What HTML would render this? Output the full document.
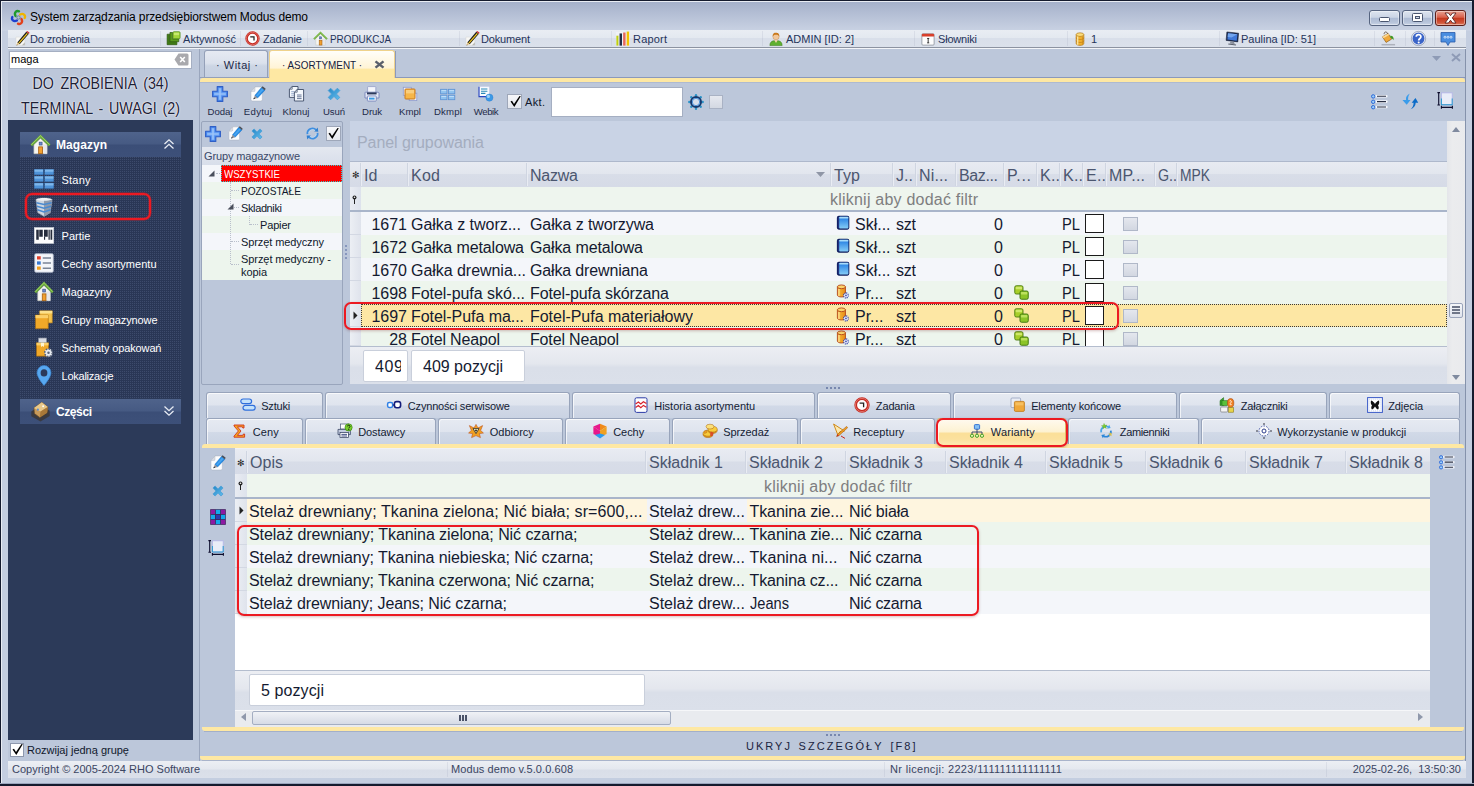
<!DOCTYPE html>
<html lang="pl"><head><meta charset="utf-8"><title>System zarządzania przedsiębiorstwem Modus demo</title><style>html,body{margin:0;padding:0}body{width:1474px;height:786px;overflow:hidden;position:relative;font-family:"Liberation Sans",sans-serif;background:#c4cee0}div{position:absolute;box-sizing:content-box}svg{display:block;overflow:visible}</style></head>
<body>
<svg width="0" height="0" style="position:absolute"><defs><linearGradient id="gdel" x1="0" y1="0" x2="1" y2="1"><stop offset="0" stop-color="#2586c6"/><stop offset="1" stop-color="#62bdec"/></linearGradient><linearGradient id="gskl" x1="0" y1="0" x2="0" y2="1"><stop offset="0" stop-color="#1f7ae2"/><stop offset="1" stop-color="#84ccf6"/></linearGradient><linearGradient id="gprod" x1="0" y1="0" x2="1" y2="0"><stop offset="0" stop-color="#f8c040"/><stop offset="1" stop-color="#e88a14"/></linearGradient></defs></svg>
<div style="left:0px;top:0px;width:1474px;height:786px;background:#c4cee0;"></div>
<div style="left:0px;top:0px;width:1474px;height:31px;background:linear-gradient(#a3afc9,#c9d2e3);"></div>
<div style="left:0px;top:0px;width:1474px;height:1px;background:#151b2e;"></div>
<div style="left:0px;top:0px;width:1px;height:786px;background:#151b2e;"></div>
<div style="left:1472px;top:0px;width:2px;height:786px;background:#151b2e;"></div>
<div style="left:0px;top:783px;width:1474px;height:1px;background:#9aa5bc;"></div>
<div style="left:0px;top:784px;width:1474px;height:2px;background:#151b2e;"></div>
<div style="left:1px;top:1px;width:1471px;height:1px;background:#e9edf4;"></div>
<div style="left:1px;top:1px;width:1px;height:782px;background:#e9edf4;"></div>
<div style="left:8px;top:30px;width:1458px;height:748px;background:#bcc7da;"></div>
<div style="left:1465px;top:30px;width:1px;height:748px;background:#8592ab;"></div>
<div style="left:10px;top:9px;width:17px;height:17px"><svg width="17" height="17" viewBox="0 0 16 16" preserveAspectRatio="none"><g fill="none" stroke-width="2.2" stroke-linecap="round"><path d="M5.2 6.5 C3.5 3.5 6 1 8.5 2.2" stroke="#1f9a2c"/><path d="M9.5 5.2 C12.5 3.5 15 6 13.8 8.5" stroke="#f0b400"/><path d="M10.8 9.5 C12.5 12.5 10 15 7.5 13.8" stroke="#e2401c"/><path d="M6.5 10.8 C3.5 12.5 1 10 2.2 7.5" stroke="#1d3fd0"/></g><circle cx="8" cy="8" r="1.6" fill="none" stroke="#5a7a8a" stroke-width=".8"/></svg></div>
<div style="left:30px;top:8px;height:18px;line-height:18px;font-size:12px;color:#000;white-space:nowrap;letter-spacing:-0.133px;">System zarządzania przedsiębiorstwem Modus demo</div>
<div style="left:1369px;top:10px;width:31px;height:16px;background:linear-gradient(#dde4ef 0%,#cbd5e5 45%,#aebcd5 52%,#b7c4da 80%,#c9d4e6 100%);border:1px solid #566480;border-radius:3px;box-sizing:border-box;box-shadow:inset 0 0 0 1px rgba(255,255,255,.4);"></div>
<div style="left:1379px;top:17px;width:11px;height:5px;background:#fff;border:1px solid #4a5670;box-sizing:border-box;border-radius:1.5px;"></div>
<div style="left:1402px;top:10px;width:31px;height:16px;background:linear-gradient(#dde4ef 0%,#cbd5e5 45%,#aebcd5 52%,#b7c4da 80%,#c9d4e6 100%);border:1px solid #566480;border-radius:3px;box-sizing:border-box;box-shadow:inset 0 0 0 1px rgba(255,255,255,.4);"></div>
<div style="left:1412px;top:13px;width:11px;height:9px;background:#fff;border:1px solid #4a5670;box-sizing:border-box;border-radius:1.5px;"></div>
<div style="left:1415px;top:16px;width:5px;height:3px;background:#cfd8e8;border:1px solid #4a5670;box-sizing:border-box;"></div>
<div style="left:1435px;top:10px;width:31px;height:16px;background:linear-gradient(#e8a394 0%,#d9604b 45%,#c4391f 52%,#cf5137 80%,#e07a5c 100%);border:1px solid #5d1f1a;border-radius:3px;box-sizing:border-box;box-shadow:inset 0 0 0 1px rgba(255,255,255,.4);"></div>
<div style="left:1444px;top:12px;width:13px;height:12px"><svg width="13" height="12" viewBox="0 0 13 12"><path d="M1 1 H4.4 L6.5 3.7 L8.6 1 H12 L8.3 5.9 L12 11 H8.6 L6.5 8.2 L4.4 11 H1 L4.7 5.9 Z" fill="#fff" stroke="#5a2626" stroke-width=".9" stroke-linejoin="round"/></svg></div>
<div style="left:8px;top:30px;width:1458px;height:17px;background:linear-gradient(#e9edf3 0%,#e3e8f0 50%,#d9dfea 50%,#dbe1eb 100%);"></div>
<div style="left:8px;top:47px;width:1458px;height:1px;background:#8c93a1;"></div>
<div style="left:8px;top:48px;width:1458px;height:1px;background:#f3f5f9;"></div>
<div style="left:15px;top:31px;width:15px;height:15px"><svg width="15" height="15" viewBox="0 0 16 16" preserveAspectRatio="none"><path d="M1 6.5 L10.5 6.5 L10.5 15.2 L1 15.2 Z" fill="#f7f7f5" stroke="#d0d0cc" stroke-width=".4"/><path d="M7.4 15.2 L10.5 12 L10.5 15.2 Z" fill="#b9b9b4"/><path d="M12 0.9 L14.8 3 L5 14.2 L2.4 12.2 Z" fill="#1c1c1c"/><path d="M12.7 2 L13.7 2.8 L4.6 13.2 L3.6 12.4 Z" fill="#f4c81c"/><path d="M2.4 12.2 L5 14.2 L1.6 15.4 Z" fill="#e9c88a"/><path d="M2 14.4 L2.8 15 L1.6 15.4 Z" fill="#222"/><path d="M12 0.9 L14.8 3 L15.6 1.9 L13 0 Z" fill="#d42a2a"/></svg></div>
<div style="left:30px;top:31px;height:16px;line-height:16px;font-size:11px;color:#25345a;white-space:nowrap;letter-spacing:-0.161px;">Do zrobienia</div>
<div style="left:166px;top:31px;width:15px;height:15px"><svg width="15" height="15" viewBox="0 0 16 16" preserveAspectRatio="none"><path d="M1.2 3.4 H4 V11.2 H11.6 V14.6 H1.2 Z" fill="#3f7a14" stroke="#2c560c" stroke-width=".7"/><path d="M4.2 1.6 H7 V8.4 H13.6 V11.4 H4.2 Z" fill="#5a9a1e" stroke="#2c560c" stroke-width=".7"/><rect x="7.4" y="0.8" width="7.6" height="7.4" rx="1" fill="#a4d63c" stroke="#4f8a18" stroke-width=".8"/><rect x="8.4" y="1.8" width="5.6" height="2.6" fill="#d0ee7c" opacity=".8"/></svg></div>
<div style="left:183px;top:31px;height:16px;line-height:16px;font-size:11px;color:#25345a;white-space:nowrap;letter-spacing:0.053px;">Aktywność</div>
<div style="left:245px;top:31px;width:15px;height:15px"><svg width="15" height="15" viewBox="0 0 16 16" preserveAspectRatio="none"><circle cx="8" cy="8" r="6.3" fill="#fdfdfd" stroke="#c62a20" stroke-width="2.7"/><circle cx="8" cy="8" r="6.6" fill="none" stroke="#f0a098" stroke-width=".7" opacity=".8"/><path d="M5.6 6.2 L9.6 6.2 L9.6 10.2" fill="none" stroke="#222" stroke-width="1.3"/></svg></div>
<div style="left:263px;top:31px;height:16px;line-height:16px;font-size:11px;color:#25345a;white-space:nowrap;letter-spacing:-0.128px;">Zadanie</div>
<div style="left:313px;top:31px;width:15px;height:15px"><svg width="15" height="15" viewBox="0 0 16 16" preserveAspectRatio="none"><path d="M3 8 L8 3.4 L13 8 V15 H3 Z" fill="#f6f6f2" stroke="#c4c4bc" stroke-width=".5"/><path d="M9.4 8 L13 8 V15 H10.6 Z" fill="#e2e4e8" opacity=".8"/><path d="M1 8.6 L8 1.8 L15 8.6" fill="none" stroke="#6cab3c" stroke-width="1.9" stroke-linejoin="miter"/><path d="M1 8.6 L8 1.8 L15 8.6" fill="none" stroke="#b4e07a" stroke-width=".5" transform="translate(0,-.5)"/><rect x="6.6" y="9.8" width="3" height="5.2" fill="#f0a030" stroke="#a05a10" stroke-width=".6"/><rect x="7" y="6.2" width="2.2" height="2.2" fill="#6a8ad0" stroke="#3a4f84" stroke-width=".5"/></svg></div>
<div style="left:330px;top:31px;height:16px;line-height:16px;font-size:11px;color:#25345a;white-space:nowrap;transform:scaleX(0.8991);transform-origin:left center;">PRODUKCJA</div>
<div style="left:465px;top:31px;width:15px;height:15px"><svg width="15" height="15" viewBox="0 0 16 16" preserveAspectRatio="none"><path d="M1 6.5 L10.5 6.5 L10.5 15.2 L1 15.2 Z" fill="#f7f7f5" stroke="#d0d0cc" stroke-width=".4"/><path d="M7.4 15.2 L10.5 12 L10.5 15.2 Z" fill="#b9b9b4"/><path d="M12 0.9 L14.8 3 L5 14.2 L2.4 12.2 Z" fill="#1c1c1c"/><path d="M12.7 2 L13.7 2.8 L4.6 13.2 L3.6 12.4 Z" fill="#f4c81c"/><path d="M2.4 12.2 L5 14.2 L1.6 15.4 Z" fill="#e9c88a"/><path d="M2 14.4 L2.8 15 L1.6 15.4 Z" fill="#222"/><path d="M12 0.9 L14.8 3 L15.6 1.9 L13 0 Z" fill="#d42a2a"/></svg></div>
<div style="left:481px;top:31px;height:16px;line-height:16px;font-size:11px;color:#25345a;white-space:nowrap;letter-spacing:-0.163px;">Dokument</div>
<div style="left:616px;top:31px;width:15px;height:15px"><svg width="15" height="15" viewBox="0 0 16 16" preserveAspectRatio="none"><rect x="0" y="1" width="14.6" height="14.6" fill="#f4f5f9" opacity=".7"/><rect x="0.4" y="5" width="2.2" height="10.6" fill="#bfcf10"/><rect x="3.8" y="2.6" width="2.6" height="13" fill="#222e48"/><rect x="7.6" y="1.6" width="2.6" height="14" fill="#e8685a"/><rect x="11.4" y="0.6" width="2.6" height="15" fill="#f2c200"/></svg></div>
<div style="left:633px;top:31px;height:16px;line-height:16px;font-size:11px;color:#25345a;white-space:nowrap;letter-spacing:0.194px;">Raport</div>
<div style="left:769px;top:32px;width:14px;height:14px"><svg width="14" height="14" viewBox="0 0 16 16" preserveAspectRatio="none"><path d="M1 15.5 C1 11 4 9.8 8 9.8 C12 9.8 15 11 15 15.5 Z" fill="#5fb030" stroke="#3a7a18" stroke-width=".6"/><path d="M6 9 L8 12.5 L10 9 Z" fill="#f6d4ae"/><circle cx="8" cy="5.3" r="3.6" fill="#f2c79a" stroke="#b98a58" stroke-width=".5"/><path d="M4.3 5 C4 1.5 6 0.8 8 0.8 C10 0.8 12 1.5 11.7 5 C11 3.4 9.5 3 8 3 C6.5 3 5 3.4 4.3 5 Z" fill="#c97a1e"/></svg></div>
<div style="left:786px;top:31px;height:16px;line-height:16px;font-size:11px;color:#25345a;white-space:nowrap;letter-spacing:0.013px;">ADMIN [ID: 2]</div>
<div style="left:921px;top:32px;width:14px;height:14px"><svg width="14" height="14" viewBox="0 0 16 16" preserveAspectRatio="none"><rect x="1" y="2" width="14" height="13" rx="1.2" fill="#fdfdfd" stroke="#8a8f9a" stroke-width=".9"/><path d="M1 3.2 a1.2 1.2 0 0 1 1.2 -1.2 H13.8 a1.2 1.2 0 0 1 1.2 1.2 V5 H1 Z" fill="#d8402c"/><path d="M7 7.4 H9.4 M8.2 7.4 V12.4 M7 12.4 H9.4" stroke="#222" stroke-width="1"/></svg></div>
<div style="left:938px;top:31px;height:16px;line-height:16px;font-size:11px;color:#25345a;white-space:nowrap;letter-spacing:-0.194px;">Słowniki</div>
<div style="left:1073px;top:32px;width:14px;height:14px"><svg width="14" height="14" viewBox="0 0 16 16" preserveAspectRatio="none"><path d="M3.6 3 V13 C3.6 14.4 5.4 15.3 8 15.3 C10.6 15.3 12.4 14.4 12.4 13 V3 Z" fill="#f0b02c" stroke="#a86c10" stroke-width=".7"/><ellipse cx="8" cy="3" rx="4.4" ry="2.1" fill="#fbdc7a" stroke="#a86c10" stroke-width=".7"/><path d="M3.6 6.4 C3.6 7.8 5.4 8.6 8 8.6 C10.6 8.6 12.4 7.8 12.4 6.4 M3.6 9.8 C3.6 11.2 5.4 12 8 12 C10.6 12 12.4 11.2 12.4 9.8" fill="none" stroke="#b87818" stroke-width=".7"/><path d="M5.4 5 V14.6" stroke="#fdeeb0" stroke-width="1.3"/><path d="M10.8 5 V14.2" stroke="#c88418" stroke-width="1.2" opacity=".6"/></svg></div>
<div style="left:1091px;top:31px;height:16px;line-height:16px;font-size:11px;color:#25345a;white-space:nowrap;">1</div>
<div style="left:1225px;top:31px;width:15px;height:15px"><svg width="15" height="15" viewBox="0 0 16 16" preserveAspectRatio="none"><path d="M2 1 L14.5 2.4 L13.6 11.6 L1.2 10 Z" fill="#1f2f55" stroke="#0e1730" stroke-width=".6"/><path d="M3.2 2.4 L13.2 3.5 L12.5 10.3 L2.6 9.1 Z" fill="#3f78d8"/><path d="M3.2 2.4 L13.2 3.5 L7 7 L2.8 6.5 Z" fill="#7fb0f4" opacity=".8"/><path d="M6 11 L9.5 11.5 L10.5 14 L5 13.4 Z" fill="#8a909c"/><path d="M3.6 13.4 L11.8 14.3 L11.6 15.4 L3.4 14.5 Z" fill="#5a606c"/></svg></div>
<div style="left:1241px;top:31px;height:16px;line-height:16px;font-size:11px;color:#25345a;white-space:nowrap;letter-spacing:-0.015px;">Paulina [ID: 51]</div>
<div style="left:160px;top:31px;width:1px;height:15px;background:rgba(140,150,175,.16);"></div>
<div style="left:240px;top:31px;width:1px;height:15px;background:rgba(140,150,175,.16);"></div>
<div style="left:307px;top:31px;width:1px;height:15px;background:rgba(140,150,175,.16);"></div>
<div style="left:459px;top:31px;width:1px;height:15px;background:rgba(140,150,175,.16);"></div>
<div style="left:611px;top:31px;width:1px;height:15px;background:rgba(140,150,175,.16);"></div>
<div style="left:762px;top:31px;width:1px;height:15px;background:rgba(140,150,175,.16);"></div>
<div style="left:914px;top:31px;width:1px;height:15px;background:rgba(140,150,175,.16);"></div>
<div style="left:1067px;top:31px;width:1px;height:15px;background:rgba(140,150,175,.16);"></div>
<div style="left:1219px;top:31px;width:1px;height:15px;background:rgba(140,150,175,.16);"></div>
<div style="left:1374px;top:31px;width:1px;height:15px;background:rgba(140,150,175,.16);"></div>
<div style="left:1405px;top:31px;width:1px;height:15px;background:rgba(140,150,175,.16);"></div>
<div style="left:1434px;top:31px;width:1px;height:15px;background:rgba(140,150,175,.16);"></div>
<div style="left:1381px;top:31px;width:15px;height:15px"><svg width="15" height="15" viewBox="0 0 16 16" preserveAspectRatio="none"><rect x="0.6" y="13.8" width="14.4" height="1.6" fill="#aeb2bc"/><path d="M1.6 6.2 L7.6 2.6 L11.4 8.6 L5.4 12.2 Z" fill="#f0a83a" stroke="#8a5a14" stroke-width=".7"/><path d="M1.6 6.2 L7.6 2.6 L8.6 4.2 L2.6 7.8 Z" fill="#fbd894"/><path d="M3.4 3.4 C3 0.6 6.4 0 7 3" fill="none" stroke="#5a4a3a" stroke-width=".9"/><path d="M9.6 5 C12.4 4.6 14 6.6 13.4 9.8 C12.4 8.4 11.4 7.6 10.4 7.4 Z" fill="#3f9a24"/></svg></div>
<div style="left:1411px;top:31px;width:15px;height:15px"><svg width="15" height="15" viewBox="0 0 16 16" preserveAspectRatio="none"><circle cx="8" cy="8" r="7" fill="#3a64c8" stroke="#e8ecf6" stroke-width="1.3"/><circle cx="8" cy="8" r="7.6" fill="none" stroke="#5a6a8a" stroke-width=".5"/><path d="M5.6 6.2 C5.6 3.2 10.6 3.2 10.6 6.2 C10.6 8 8.2 8 8.2 10" fill="none" stroke="#fff" stroke-width="1.8"/><circle cx="8.2" cy="12.2" r="1.1" fill="#fff"/></svg></div>
<div style="left:1440px;top:31px;width:16px;height:16px"><svg width="16" height="16" viewBox="0 0 16 16" preserveAspectRatio="none"><path d="M1 1.5 H15 V11 H10 L8 14.5 L6 11 H1 Z" fill="#4a8ee0" stroke="#2a5aa8" stroke-width=".8"/><circle cx="5" cy="6.2" r="1" fill="none" stroke="#fff" stroke-width=".7"/><circle cx="8" cy="6.2" r="1" fill="none" stroke="#fff" stroke-width=".7"/><circle cx="11" cy="6.2" r="1" fill="none" stroke="#fff" stroke-width=".7"/></svg></div>
<div style="left:9px;top:51px;width:183px;height:18px;background:#fff;border:1px solid #a5afc2;box-sizing:border-box;"></div>
<div style="left:11px;top:51px;height:17px;line-height:17px;font-size:11px;color:#000;white-space:nowrap;">maga</div>
<div style="left:174px;top:53px;width:15px;height:13px"><svg width="15" height="13" viewBox="0 0 15 13"><path d="M4.5 0.5 H13 a1.5 1.5 0 0 1 1.5 1.5 V11 a1.5 1.5 0 0 1 -1.5 1.5 H4.5 L0.5 6.5 Z" fill="#a9a9ad"/><path d="M6.2 4 L10.8 9 M10.8 4 L6.2 9" stroke="#fff" stroke-width="1.6"/></svg></div>
<div style="left:8px;top:72px;height:24px;line-height:24px;font-size:16px;color:#1c2036;white-space:nowrap;width:185px;text-align:center;overflow:hidden;transform:scaleX(0.8906);transform-origin:center center;text-shadow:0 0 2px #fff,0 0 1px #fff;word-spacing:3px;">DO ZROBIENIA (34)</div>
<div style="left:8px;top:97px;height:24px;line-height:24px;font-size:16px;color:#1c2036;white-space:nowrap;width:185px;text-align:center;overflow:hidden;transform:scaleX(0.8925);transform-origin:center center;text-shadow:0 0 2px #fff,0 0 1px #fff;word-spacing:2px;">TERMINAL - UWAGI (2)</div>
<div style="left:8px;top:120px;width:185px;height:620px;background:#2c3a59;"></div>
<div style="left:20px;top:157px;width:161px;height:241px;background:#2a3756"><svg width="161" height="241"><defs><pattern id="dots" width="2" height="2" patternUnits="userSpaceOnUse"><rect width="1" height="1" fill="#3d4b6c"/></pattern></defs><rect width="161" height="241" fill="url(#dots)"/></svg></div>
<div style="left:20px;top:132px;width:161px;height:25px;background:linear-gradient(#4f638b 0%,#465a83 48%,#3b4e77 52%,#3d5079 100%);"></div>
<div style="left:30px;top:134px;width:21px;height:21px"><svg width="21" height="21" viewBox="0 0 16 16" preserveAspectRatio="none"><path d="M3 8 L8 3.4 L13 8 V15 H3 Z" fill="#f6f6f2" stroke="#c4c4bc" stroke-width=".5"/><path d="M9.4 8 L13 8 V15 H10.6 Z" fill="#e2e4e8" opacity=".8"/><path d="M1 8.6 L8 1.8 L15 8.6" fill="none" stroke="#6cab3c" stroke-width="1.9" stroke-linejoin="miter"/><path d="M1 8.6 L8 1.8 L15 8.6" fill="none" stroke="#b4e07a" stroke-width=".5" transform="translate(0,-.5)"/><rect x="6.6" y="9.8" width="3" height="5.2" fill="#f0a030" stroke="#a05a10" stroke-width=".6"/><rect x="7" y="6.2" width="2.2" height="2.2" fill="#6a8ad0" stroke="#3a4f84" stroke-width=".5"/></svg></div>
<div style="left:56px;top:133px;height:25px;line-height:25px;font-size:12px;color:#fff;white-space:nowrap;letter-spacing:0.052px;font-weight:bold;">Magazyn</div>
<div style="left:163px;top:138px;width:12px;height:12px"><svg width="12" height="12" viewBox="0 0 12 12"><path d="M1.5 6 L6 1.8 L10.5 6 M1.5 10.5 L6 6.3 L10.5 10.5" fill="none" stroke="#e8ecf4" stroke-width="1.3"/></svg></div>
<div style="left:34px;top:169px;width:20px;height:20px"><svg width="20" height="20" viewBox="0 0 16 16" preserveAspectRatio="none"><g fill="#4f93d8" stroke="#3473b8" stroke-width=".3"><rect x="0.2" y="0.2" width="7.2" height="4.4"/><rect x="8.6" y="0.2" width="7.2" height="4.4"/><rect x="0.2" y="5.7" width="7.2" height="4.4"/><rect x="8.6" y="5.7" width="7.2" height="4.4"/><rect x="0.2" y="11.2" width="7.2" height="4.4"/><rect x="8.6" y="11.2" width="7.2" height="4.4"/></g><g fill="#8fc4f2" opacity=".75"><rect x="0.4" y="0.4" width="6.8" height="1.8"/><rect x="8.8" y="0.4" width="6.8" height="1.8"/><rect x="0.4" y="5.9" width="6.8" height="1.8"/><rect x="8.8" y="5.9" width="6.8" height="1.8"/><rect x="0.4" y="11.4" width="6.8" height="1.8"/><rect x="8.8" y="11.4" width="6.8" height="1.8"/></g></svg></div>
<div style="left:61.5px;top:171px;height:18px;line-height:18px;font-size:11px;color:#fff;white-space:nowrap;letter-spacing:0.215px;">Stany</div>
<div style="left:34px;top:197px;width:20px;height:20px"><svg width="20" height="20" viewBox="0 0 16 16" preserveAspectRatio="none"><path d="M1.5 2 C5 0.4 11 0.4 14.5 2 L13 12.5 L8 15.5 L3 12.5 Z" fill="#cfd6e0" stroke="#8a94a4" stroke-width=".5"/><path d="M8 2.4 L14.5 2 L13 12.5 L8 15.5 Z" fill="#8f9aac"/><path d="M1.9 4.6 L8 6 L14.1 4.6 M2.3 7.4 L8 9 L13.7 7.4 M2.7 10.2 L8 12 L13.3 10.2" fill="none" stroke="#4a8ad0" stroke-width="1.2"/><path d="M1.5 2 C5 0.4 11 0.4 14.5 2 C11 3.4 5 3.4 1.5 2 Z" fill="#eef1f5"/></svg></div>
<div style="left:61.5px;top:199px;height:18px;line-height:18px;font-size:11px;color:#fff;white-space:nowrap;letter-spacing:0.040px;">Asortyment</div>
<div style="left:34px;top:225px;width:20px;height:20px"><svg width="20" height="20" viewBox="0 0 16 16" preserveAspectRatio="none"><rect x="0.2" y="2" width="15.6" height="12.8" fill="#fdfdfe" stroke="#d0d4dc" stroke-width=".4"/><g fill="#262c3c"><rect x="1.8" y="3.8" width="2" height="8"/><rect x="4.2" y="3.8" width="2.8" height="5.6"/><rect x="8" y="3.8" width="3" height="5.6"/><rect x="11.6" y="3.8" width="1" height="8"/><rect x="13.2" y="3.8" width="1.4" height="8"/><rect x="8" y="9.4" width=".9" height="2.4"/></g></svg></div>
<div style="left:61.5px;top:227px;height:18px;line-height:18px;font-size:11px;color:#fff;white-space:nowrap;letter-spacing:0.050px;">Partie</div>
<div style="left:34px;top:253px;width:20px;height:20px"><svg width="20" height="20" viewBox="0 0 16 16" preserveAspectRatio="none"><rect x="0.6" y="0.6" width="14.8" height="14.8" rx="1" fill="#f4f6fa" stroke="#b8c0d0" stroke-width=".6"/><rect x="2.4" y="2.6" width="3" height="2.6" fill="#e0402c"/><rect x="2.4" y="6.7" width="3" height="2.6" fill="#3a7ad0"/><rect x="2.4" y="10.8" width="3" height="2.6" fill="#f0a020"/><path d="M7 3.9 H13.6 M7 8 H13.6 M7 12.1 H13.6" stroke="#7a8496" stroke-width="1.2"/></svg></div>
<div style="left:61.5px;top:255px;height:18px;line-height:18px;font-size:11px;color:#fff;white-space:nowrap;letter-spacing:0.015px;">Cechy asortymentu</div>
<div style="left:34px;top:281px;width:20px;height:21px"><svg width="20" height="21" viewBox="0 0 16 16" preserveAspectRatio="none"><path d="M3 8 L8 3.4 L13 8 V15 H3 Z" fill="#f6f6f2" stroke="#c4c4bc" stroke-width=".5"/><path d="M9.4 8 L13 8 V15 H10.6 Z" fill="#e2e4e8" opacity=".8"/><path d="M1 8.6 L8 1.8 L15 8.6" fill="none" stroke="#6cab3c" stroke-width="1.9" stroke-linejoin="miter"/><path d="M1 8.6 L8 1.8 L15 8.6" fill="none" stroke="#b4e07a" stroke-width=".5" transform="translate(0,-.5)"/><rect x="6.6" y="9.8" width="3" height="5.2" fill="#f0a030" stroke="#a05a10" stroke-width=".6"/><rect x="7" y="6.2" width="2.2" height="2.2" fill="#6a8ad0" stroke="#3a4f84" stroke-width=".5"/></svg></div>
<div style="left:61.5px;top:283px;height:18px;line-height:18px;font-size:11px;color:#fff;white-space:nowrap;letter-spacing:-0.020px;">Magazyny</div>
<div style="left:34px;top:309px;width:20px;height:21px"><svg width="20" height="21" viewBox="0 0 16 16" preserveAspectRatio="none"><path d="M4.6 1.4 H14.6 V10.6 H4.6 Z" fill="#f6c24a" stroke="#b8801c" stroke-width=".5"/><path d="M4.6 1.4 H14.6 V3.4 H4.6 Z" fill="#fbe08c"/><path d="M1.2 4.6 H11.4 V15 H1.2 Z" fill="#f0a828" stroke="#a86c10" stroke-width=".5"/><path d="M1.2 4.6 H11.4 V7 H1.2 Z" fill="#fbd06a"/></svg></div>
<div style="left:61.5px;top:311px;height:18px;line-height:18px;font-size:11px;color:#fff;white-space:nowrap;letter-spacing:-0.122px;">Grupy magazynowe</div>
<div style="left:34px;top:337px;width:20px;height:21px"><svg width="20" height="21" viewBox="0 0 16 16" preserveAspectRatio="none"><path d="M2 4.4 H11.6 V14.6 H2 Z" fill="#f0a828" stroke="#a86c10" stroke-width=".5"/><path d="M3.6 0.8 H10 V4.4 H3.6 Z" fill="#d8dce4" stroke="#8a909c" stroke-width=".5"/><path d="M2 4.4 H11.6 V6.4 H2 Z" fill="#fbd06a"/><path d="M5.6 4.4 H8 V7.6 L6.8 6.8 L5.6 7.6 Z" fill="#fff4d0"/><circle cx="11.6" cy="12" r="3" fill="#e8ecf2" stroke="#5a6478" stroke-width="1.3" stroke-dasharray="1.3 1"/><circle cx="11.6" cy="12" r="1" fill="#5a6478"/></svg></div>
<div style="left:61.5px;top:339px;height:18px;line-height:18px;font-size:11px;color:#fff;white-space:nowrap;letter-spacing:-0.133px;">Schematy opakowań</div>
<div style="left:34px;top:365px;width:20px;height:21px"><svg width="20" height="21" viewBox="0 0 16 16" preserveAspectRatio="none"><path d="M8 15.6 C8 15.6 2.4 9.4 2.4 6 A5.6 5.6 0 0 1 13.6 6 C13.6 9.4 8 15.6 8 15.6 Z" fill="#58a8f0" stroke="#3a86d4" stroke-width=".5"/><circle cx="8" cy="6" r="2.7" fill="#2c3a59"/></svg></div>
<div style="left:61.5px;top:367px;height:18px;line-height:18px;font-size:11px;color:#fff;white-space:nowrap;letter-spacing:-0.242px;">Lokalizacje</div>
<div style="left:25px;top:193px;width:126px;height:27px;border:2px solid #ec1a22;border-radius:7px;box-sizing:border-box;box-shadow:0 0 0 .5px rgba(236,26,34,.6),inset 0 0 0 .5px rgba(236,26,34,.5);"></div>
<div style="left:20px;top:399px;width:161px;height:25px;background:linear-gradient(#4f638b 0%,#465a83 48%,#3b4e77 52%,#3d5079 100%);"></div>
<div style="left:30px;top:401px;width:21px;height:21px"><svg width="21" height="21" viewBox="0 0 16 16" preserveAspectRatio="none"><path d="M1 8 L8 3 L15 7.4 L15 11.4 L8 15.6 L1 11.6 Z" fill="#3a3a40"/><path d="M3 5.4 L9 1 L13.6 4.6 L13 9 L7.4 12.6 L3.4 9.6 Z" fill="#c89a5a" stroke="#6a4a20" stroke-width=".5"/><path d="M3 5.4 L9 1 L13.6 4.6 L8 8 Z" fill="#e8c88a"/><path d="M8 8 L13.6 4.6 L13 9 L7.4 12.6 Z" fill="#a87838"/><circle cx="6" cy="6.6" r=".8" fill="#5a8ad0"/><circle cx="10" cy="4" r=".7" fill="#fff"/></svg></div>
<div style="left:56px;top:400px;height:25px;line-height:25px;font-size:12px;color:#fff;white-space:nowrap;letter-spacing:-0.406px;font-weight:bold;">Części</div>
<div style="left:163px;top:405px;width:12px;height:12px"><svg width="12" height="12" viewBox="0 0 12 12"><path d="M1.5 1.5 L6 5.7 L10.5 1.5 M1.5 6 L6 10.2 L10.5 6" fill="none" stroke="#e8ecf4" stroke-width="1.3"/></svg></div>
<div style="left:10px;top:743px;width:14px;height:14px;background:#fff;border:1px solid #8e98ad;box-sizing:border-box;"></div>
<div style="left:11px;top:743px;width:13px;height:13px"><svg width="13" height="13" viewBox="0 0 13 13"><path d="M1.5 6.5 L3 5.8 L5 9 L10.5 1 L11.8 1.3 L5.3 12 Z" fill="#000"/></svg></div>
<div style="left:27px;top:742px;height:16px;line-height:16px;font-size:11px;color:#10182c;white-space:nowrap;letter-spacing:-0.007px;">Rozwijaj jedną grupę</div>
<div style="left:199px;top:49px;width:1px;height:712px;background:#9aa6bd;"></div>
<div style="left:204px;top:50px;width:64px;height:28px;background:linear-gradient(#e6eaf2 0%,#dbe1ec 45%,#ccd5e4 55%,#c6d0e1 100%);border:1px solid #94a0b8;border-bottom:none;border-radius:3px 3px 0 0;box-sizing:border-box;"></div>
<div style="left:216px;top:52px;height:26px;line-height:26px;font-size:11px;color:#1e2a48;white-space:nowrap;letter-spacing:0.514px;">· Witaj ·</div>
<div style="left:269px;top:50px;width:126px;height:30px;background:linear-gradient(#fffefa 0%,#fff4d6 58%,#fee8a3 64%,#fee8a3 100%);border:1px solid #efd28c;border-bottom:none;border-radius:3px 3px 0 0;box-sizing:border-box;"></div>
<div style="left:282px;top:52px;height:26px;line-height:26px;font-size:11px;color:#15203a;white-space:nowrap;transform:scaleX(0.9006);transform-origin:left center;">· ASORTYMENT ·</div>
<div style="left:374px;top:60px;width:11px;height:9px"><svg width="11" height="9" viewBox="0 0 11 10" preserveAspectRatio="none"><path d="M1.5 1.5 L9.5 8.5 M9.5 1.5 L1.5 8.5" stroke="#5a5f6b" stroke-width="2.4"/></svg></div>
<div style="left:1432px;top:56px;width:9px;height:5px"><svg width="9" height="5" viewBox="0 0 9 5"><path d="M0 0 H9 L4.5 5 Z" fill="#8e9bb6"/></svg></div>
<div style="left:1451px;top:53px;width:10px;height:9px"><svg width="10" height="9" viewBox="0 0 10 9"><path d="M1 1 L9 8 M9 1 L1 8" stroke="#8e9bb6" stroke-width="2"/></svg></div>
<div style="left:200px;top:78px;width:1265px;height:4px;background:#fee8a3;border-radius:3px 3px 0 0;"></div>
<div style="left:200px;top:77px;width:69px;height:1px;background:#94a0b8;"></div>
<div style="left:395px;top:77px;width:1070px;height:1px;background:#8b99bb;"></div>
<div style="left:395px;top:51px;width:1px;height:27px;background:#8b99bb;"></div>
<div style="left:200px;top:82px;width:1265px;height:1px;background:#aebad0;"></div>
<div style="left:212px;top:86px;width:16px;height:16px"><svg width="16" height="16" viewBox="0 0 16 16" preserveAspectRatio="none"><path d="M5.2 0.6 H10.8 V5.2 H15.4 V10.8 H10.8 V15.4 H5.2 V10.8 H0.6 V5.2 H5.2 Z" fill="#4b8cf0" stroke="#2f5fc6" stroke-width="1.1" stroke-linejoin="round"/><path d="M6.6 2 H9.4 V6.6 H14 V9.4 H9.4 V14 H6.6 V9.4 H2 V6.6 H6.6 Z" fill="#86b6f8" opacity=".75"/><path d="M7.4 2.4 H8.6 V7.4 H13.6 V8.6 H8.6 V13.6 H7.4 V8.6 H2.4 V7.4 H7.4 Z" fill="#b4d4fb" opacity=".7"/></svg></div>
<div style="left:200px;top:105px;height:13px;line-height:13px;font-size:9.6px;color:#1e2a48;white-space:nowrap;width:40px;text-align:center;overflow:hidden;letter-spacing:-0.020px;">Dodaj</div>
<div style="left:250px;top:86px;width:16px;height:16px"><svg width="16" height="16" viewBox="0 0 16 16" preserveAspectRatio="none"><path d="M1 5.6 L5 0.9 H11 C11.8 0.9 12.3 1.4 12.3 2.2 V13.6 C12.3 14.5 11.8 15 11 15 H2.6 C1.6 15 1 14.5 1 13.6 Z" fill="#fcfdfe" stroke="#aab0be" stroke-width=".5"/><path d="M1 5.6 L5 0.9 V4.4 C5 5.2 4.6 5.6 3.8 5.6 Z" fill="#d9dde6" stroke="#aab0be" stroke-width=".4"/><path d="M11.4 1.4 L14.9 4.2 L7.6 12 L4.8 9.4 Z" fill="#1f8ae6" stroke="#1565b8" stroke-width=".4"/><path d="M12 2.6 L13.6 3.9 L7.4 10.6 L6 9.4 Z" fill="#58aef2" opacity=".75"/><path d="M12.6 0.3 L15.7 2.8 L14.9 4.2 L11.4 1.4 Z" fill="#4a4f58"/><path d="M4.8 9.4 L7.6 12 L3.4 13.2 Z" fill="#8a8f98"/><path d="M4 11.6 L5 12.7 L3.4 13.2 Z" fill="#222"/></svg></div>
<div style="left:238px;top:105px;height:13px;line-height:13px;font-size:9.6px;color:#1e2a48;white-space:nowrap;width:40px;text-align:center;overflow:hidden;letter-spacing:0.266px;">Edytuj</div>
<div style="left:288px;top:86px;width:16px;height:16px"><svg width="16" height="16" viewBox="0 0 16 16" preserveAspectRatio="none"><path d="M1.4 3.2 L4.2 0.5 H10 V11.4 H1.4 Z" fill="#f4f8fd" stroke="#3d4c66" stroke-width=".9"/><path d="M1.4 3.2 H4.2 V0.5" fill="none" stroke="#3d4c66" stroke-width=".7"/><path d="M3.2 5.6 H6.6 M3.2 7.4 H6 M3.2 9.2 H6" stroke="#8aa0c4" stroke-width=".8"/><path d="M6.4 6.2 L9.2 3.5 H15.6 V15 H6.4 Z" fill="#f4f8fd" stroke="#3d4c66" stroke-width=".9"/><path d="M6.4 6.2 H9.2 V3.5" fill="none" stroke="#3d4c66" stroke-width=".7"/><path d="M9 9 H13.6 M9 10.8 H13.6 M9 12.6 H13.6" stroke="#5a6a8c" stroke-width=".9"/></svg></div>
<div style="left:276px;top:105px;height:13px;line-height:13px;font-size:9.6px;color:#1e2a48;white-space:nowrap;width:40px;text-align:center;overflow:hidden;letter-spacing:0.066px;">Klonuj</div>
<div style="left:326px;top:86px;width:16px;height:16px"><svg width="16" height="16" viewBox="0 0 16 16" preserveAspectRatio="none"><path d="M2.2 4.6 L4.6 2.2 L8 5.6 L11.4 2.2 L13.8 4.6 L10.4 8 L13.8 11.4 L11.4 13.8 L8 10.4 L4.6 13.8 L2.2 11.4 L5.6 8 Z" fill="url(#gdel)" stroke="#4aa0d8" stroke-width=".9" stroke-linejoin="round"/></svg></div>
<div style="left:314px;top:105px;height:13px;line-height:13px;font-size:9.6px;color:#1e2a48;white-space:nowrap;width:40px;text-align:center;overflow:hidden;letter-spacing:-0.135px;">Usuń</div>
<div style="left:364px;top:86px;width:16px;height:16px"><svg width="16" height="16" viewBox="0 0 16 16" preserveAspectRatio="none"><rect x="3.6" y="0.6" width="8.2" height="7" rx=".6" fill="#f4f6fc" stroke="#8a94c0" stroke-width=".7"/><path d="M1.4 6.2 H14 C14.6 6.2 15 6.6 15 7.2 V12 H1 V7.2 C1 6.6 1.2 6.2 1.4 6.2 Z" fill="#e4e8f6" stroke="#6a78b4" stroke-width=".8"/><rect x="3" y="6.4" width="9.6" height="2" fill="#2c3a5c"/><rect x="3.4" y="10" width="8.8" height="5" rx=".5" fill="#fbfcfe" stroke="#6a78b4" stroke-width=".8"/><rect x="5" y="11.6" width="5.6" height="2" fill="#3a9ae4"/></svg></div>
<div style="left:352px;top:105px;height:13px;line-height:13px;font-size:9.6px;color:#1e2a48;white-space:nowrap;width:40px;text-align:center;overflow:hidden;letter-spacing:-0.089px;">Druk</div>
<div style="left:402px;top:86px;width:16px;height:16px"><svg width="16" height="16" viewBox="0 0 16 16" preserveAspectRatio="none"><rect x="1.3" y="1.3" width="8" height="8" fill="#eef1fa" stroke="#8f9ccc" stroke-width=".8"/><rect x="7.2" y="7.2" width="7.6" height="7.4" fill="#eef1fa" stroke="#8f9ccc" stroke-width=".8"/><rect x="3" y="3" width="10" height="10" rx=".8" fill="#f6b648" stroke="#c9781c" stroke-width="1"/><rect x="4" y="4" width="8" height="3.4" fill="#fbd48a" opacity=".8"/></svg></div>
<div style="left:390px;top:105px;height:13px;line-height:13px;font-size:9.6px;color:#1e2a48;white-space:nowrap;width:40px;text-align:center;overflow:hidden;letter-spacing:0.047px;">Kmpl</div>
<div style="left:440px;top:86px;width:16px;height:16px"><svg width="16" height="16" viewBox="0 0 16 16" preserveAspectRatio="none"><g fill="#8fc2ee" stroke="#5b92d4" stroke-width=".8"><rect x="0.6" y="3.3" width="6.4" height="4.5"/><rect x="8.4" y="3.3" width="6.4" height="4.5"/><rect x="0.6" y="9.2" width="6.4" height="4.5"/><rect x="8.4" y="9.2" width="6.4" height="4.5"/></g><path d="M1.4 4.6 H6.2 M9.2 4.6 H14 M1.4 10.5 H6.2 M9.2 10.5 H14" stroke="#c4e0f8" stroke-width=".9"/></svg></div>
<div style="left:428px;top:105px;height:13px;line-height:13px;font-size:9.6px;color:#1e2a48;white-space:nowrap;width:40px;text-align:center;overflow:hidden;letter-spacing:0.203px;">Dkmpl</div>
<div style="left:478px;top:86px;width:16px;height:16px"><svg width="16" height="16" viewBox="0 0 16 16" preserveAspectRatio="none"><rect x="1" y="0.6" width="10.4" height="10" rx=".6" fill="#fbfcfe" stroke="#c0c8e8" stroke-width=".6"/><path d="M1 0.8 V10.6 H11.4" fill="none" stroke="#2746c0" stroke-width="1.1"/><path d="M3 3 H9.4 M3 5.2 H9.4 M3 7.4 H7.4" stroke="#2a8ab8" stroke-width="1.1"/><circle cx="11.4" cy="11.6" r="3.6" fill="#3c9ae6" stroke="#2a7ad0" stroke-width=".4"/><circle cx="10.4" cy="10.4" r="1.6" fill="#b8e0fb" opacity=".8"/></svg></div>
<div style="left:466px;top:105px;height:13px;line-height:13px;font-size:9.6px;color:#1e2a48;white-space:nowrap;width:40px;text-align:center;overflow:hidden;letter-spacing:-0.371px;">Webik</div>
<div style="left:507px;top:94px;width:15px;height:15px;background:linear-gradient(#f6f7fa,#e3e6ed);border:1px solid #9ea7b9;box-sizing:border-box;"></div>
<div style="left:509px;top:95px;width:13px;height:13px"><svg width="13" height="13" viewBox="0 0 13 13"><path d="M1.5 6.5 L3 5.8 L5 9 L10.5 1 L11.8 1.3 L5.3 12 Z" fill="#000"/></svg></div>
<div style="left:525px;top:94px;height:16px;line-height:16px;font-size:11px;color:#10182c;white-space:nowrap;letter-spacing:0.349px;">Akt.</div>
<div style="left:551px;top:87px;width:132px;height:30px;background:#fff;border:1px solid #a5afc2;box-sizing:border-box;"></div>
<div style="left:688px;top:94px;width:16px;height:16px"><svg width="16" height="16" viewBox="0 0 16 16" preserveAspectRatio="none"><g fill="#2b93c8"><circle cx="8" cy="1.3" r="1.2"/><circle cx="8" cy="14.7" r="1.2"/><circle cx="1.3" cy="8" r="1.2"/><circle cx="14.7" cy="8" r="1.2"/><circle cx="3.3" cy="3.3" r="1.2"/><circle cx="12.7" cy="3.3" r="1.2"/><circle cx="3.3" cy="12.7" r="1.2"/><circle cx="12.7" cy="12.7" r="1.2"/></g><circle cx="8" cy="8" r="5" fill="#d6deec" stroke="#14386e" stroke-width="2"/><circle cx="8" cy="8" r="3.7" fill="none" stroke="#3f8fdc" stroke-width=".9"/></svg></div>
<div style="left:709px;top:95px;width:14px;height:14px;background:linear-gradient(#e6e9f0,#d3d8e2);border:1px solid #a9b2c4;box-sizing:border-box;"></div>
<div style="left:1371px;top:94px;width:16px;height:16px"><svg width="16" height="16" viewBox="0 0 16 16" preserveAspectRatio="none"><path d="M5.4 2.2 H15.4 M5.4 7.6 H15.4 M5.4 13 H15.4" stroke="#f4f6fb" stroke-width="2.6" stroke-linecap="round"/><path d="M6 2.2 H15 M6 7.6 H15 M6 13 H15" stroke="#2a3044" stroke-width="1.1"/><g fill="#9fd0f8" stroke="#2a68d8" stroke-width="1"><circle cx="2.2" cy="2.4" r="1.7"/><circle cx="2.2" cy="7.8" r="1.7"/><circle cx="2.2" cy="13.2" r="1.7"/></g></svg></div>
<div style="left:1402px;top:93px;width:17px;height:17px"><svg width="17" height="17" viewBox="0 0 16 16" preserveAspectRatio="none"><path d="M7.6 0.4 C4.5 1.5 3.4 4 3.8 6.5 L0.4 6.5 L4.4 11 L8 6.5 L5.8 6.5 C5.6 4 6 2 7.6 0.4 Z" fill="#3a9cea"/><path d="M8 15.3 C11 14.2 12.8 12 12.9 9.1 L15.3 9.1 L12.7 4.7 L9.1 9.1 L10.9 9.1 C10.9 11.5 10 13.8 8 15.3 Z" fill="#0c6cc8"/></svg></div>
<div style="left:1437px;top:92px;width:16px;height:17px"><svg width="16" height="17" viewBox="0 0 16 16" preserveAspectRatio="none"><rect x="4.4" y="0.8" width="10.8" height="11.2" fill="#e9edf8" stroke="#b4b4e8" stroke-width=".8"/><path d="M4.4 6 V12 H15.2 V6" fill="none" stroke="#2a9ad0" stroke-width="1"/><path d="M0.4 0.6 H3 M1.7 0.6 V12.2 M0.4 12.2 H3" stroke="#0c0c2c" stroke-width="1.1"/><path d="M4.4 14.4 H15.4 M4.4 13 V15.8 M15.4 13 V15.8" stroke="#0c0c2c" stroke-width="1.1"/></svg></div>
<div style="left:201px;top:121px;width:142px;height:264px;border:1px solid #99a5bc;border-radius:2px;box-sizing:border-box;"></div>
<div style="left:205px;top:126px;width:16px;height:16px"><svg width="16" height="16" viewBox="0 0 16 16" preserveAspectRatio="none"><path d="M5.2 0.6 H10.8 V5.2 H15.4 V10.8 H10.8 V15.4 H5.2 V10.8 H0.6 V5.2 H5.2 Z" fill="#4b8cf0" stroke="#2f5fc6" stroke-width="1.1" stroke-linejoin="round"/><path d="M6.6 2 H9.4 V6.6 H14 V9.4 H9.4 V14 H6.6 V9.4 H2 V6.6 H6.6 Z" fill="#86b6f8" opacity=".75"/><path d="M7.4 2.4 H8.6 V7.4 H13.6 V8.6 H8.6 V13.6 H7.4 V8.6 H2.4 V7.4 H7.4 Z" fill="#b4d4fb" opacity=".7"/></svg></div>
<div style="left:228px;top:126px;width:15px;height:15px"><svg width="15" height="15" viewBox="0 0 16 16" preserveAspectRatio="none"><path d="M1 5.6 L5 0.9 H11 C11.8 0.9 12.3 1.4 12.3 2.2 V13.6 C12.3 14.5 11.8 15 11 15 H2.6 C1.6 15 1 14.5 1 13.6 Z" fill="#fcfdfe" stroke="#aab0be" stroke-width=".5"/><path d="M1 5.6 L5 0.9 V4.4 C5 5.2 4.6 5.6 3.8 5.6 Z" fill="#d9dde6" stroke="#aab0be" stroke-width=".4"/><path d="M11.4 1.4 L14.9 4.2 L7.6 12 L4.8 9.4 Z" fill="#1f8ae6" stroke="#1565b8" stroke-width=".4"/><path d="M12 2.6 L13.6 3.9 L7.4 10.6 L6 9.4 Z" fill="#58aef2" opacity=".75"/><path d="M12.6 0.3 L15.7 2.8 L14.9 4.2 L11.4 1.4 Z" fill="#4a4f58"/><path d="M4.8 9.4 L7.6 12 L3.4 13.2 Z" fill="#8a8f98"/><path d="M4 11.6 L5 12.7 L3.4 13.2 Z" fill="#222"/></svg></div>
<div style="left:250px;top:127px;width:14px;height:14px"><svg width="14" height="14" viewBox="0 0 16 16" preserveAspectRatio="none"><path d="M2.2 4.6 L4.6 2.2 L8 5.6 L11.4 2.2 L13.8 4.6 L10.4 8 L13.8 11.4 L11.4 13.8 L8 10.4 L4.6 13.8 L2.2 11.4 L5.6 8 Z" fill="url(#gdel)" stroke="#4aa0d8" stroke-width=".9" stroke-linejoin="round"/></svg></div>
<div style="left:305px;top:126px;width:15px;height:15px"><svg width="15" height="15" viewBox="0 0 16 16" preserveAspectRatio="none"><path d="M2.6 8.6 A5.4 5.4 0 0 1 12 4.4" fill="none" stroke="#3f8fe0" stroke-width="2"/><path d="M13.4 7.4 A5.4 5.4 0 0 1 4 11.6" fill="none" stroke="#3f8fe0" stroke-width="2"/><path d="M9.8 5.8 L14.2 6 L13.6 1.6 Z" fill="#2f7fd0"/><path d="M6.2 10.2 L1.8 10 L2.4 14.4 Z" fill="#2f7fd0"/><path d="M4 7.8 A4 4 0 0 1 10.8 5 M12 8.2 A4 4 0 0 1 5.2 11" fill="none" stroke="#bfe0fb" stroke-width=".7"/></svg></div>
<div style="left:326px;top:126px;width:15px;height:15px;background:linear-gradient(#f8f9fb,#e6e9ef);border:1px solid #9ea7b9;box-sizing:border-box;"></div>
<div style="left:327px;top:127px;width:13px;height:13px"><svg width="13" height="13" viewBox="0 0 13 13"><path d="M1.5 6.5 L3 5.8 L5 9 L10.5 1 L11.8 1.3 L5.3 12 Z" fill="#000"/></svg></div>
<div style="left:202px;top:147px;width:140px;height:18px;background:linear-gradient(#e4e8f0,#d8deea);"></div>
<div style="left:204px;top:147px;height:18px;line-height:18px;font-size:11px;color:#3a4868;white-space:nowrap;letter-spacing:-0.122px;">Grupy magazynowe</div>
<div style="left:202px;top:165px;width:140px;height:17px;background:#f4f6fa;"></div>
<div style="left:202px;top:182px;width:140px;height:17px;background:#edf5ed;"></div>
<div style="left:202px;top:199px;width:140px;height:17px;background:#f4f6fa;"></div>
<div style="left:202px;top:216px;width:140px;height:17px;background:#edf5ed;"></div>
<div style="left:202px;top:233px;width:140px;height:17px;background:#f4f6fa;"></div>
<div style="left:202px;top:250px;width:140px;height:30px;background:#edf5ed;"></div>
<div style="left:221px;top:165px;width:121px;height:17px;background:#ff0000;outline:1px dotted #30d0d0;outline-offset:-1px;"></div>
<div style="left:224px;top:166px;height:17px;line-height:17px;font-size:11px;color:#fff;white-space:nowrap;transform:scaleX(0.8810);transform-origin:left center;">WSZYSTKIE</div>
<div style="left:241px;top:183px;height:17px;line-height:17px;font-size:11px;color:#10182c;white-space:nowrap;transform:scaleX(0.9202);transform-origin:left center;">POZOSTAŁE</div>
<div style="left:241px;top:200px;height:17px;line-height:17px;font-size:11px;color:#10182c;white-space:nowrap;letter-spacing:-0.379px;">Skladniki</div>
<div style="left:260px;top:217px;height:17px;line-height:17px;font-size:11px;color:#10182c;white-space:nowrap;letter-spacing:-0.159px;">Papier</div>
<div style="left:241px;top:234px;height:17px;line-height:17px;font-size:11px;color:#10182c;white-space:nowrap;letter-spacing:-0.098px;">Sprzęt medyczny</div>
<div style="left:241px;top:252px;height:15px;line-height:15px;font-size:11px;color:#10182c;white-space:nowrap;letter-spacing:-0.068px;">Sprzęt medyczny -</div>
<div style="left:241px;top:265px;height:15px;line-height:15px;font-size:11px;color:#10182c;white-space:nowrap;letter-spacing:-0.074px;">kopia</div>
<div style="left:216px;top:173px;width:6px;height:1px;border-top:1px dotted #b9bfcb;"></div>
<div style="left:230px;top:182px;width:1px;height:82px;border-left:1px dotted #b9bfcb;"></div>
<div style="left:231px;top:190px;width:8px;height:1px;border-top:1px dotted #b9bfcb;"></div>
<div style="left:231px;top:207px;width:8px;height:1px;border-top:1px dotted #b9bfcb;"></div>
<div style="left:231px;top:241px;width:8px;height:1px;border-top:1px dotted #b9bfcb;"></div>
<div style="left:231px;top:264px;width:8px;height:1px;border-top:1px dotted #b9bfcb;"></div>
<div style="left:249px;top:216px;width:1px;height:9px;border-left:1px dotted #b9bfcb;"></div>
<div style="left:250px;top:224px;width:8px;height:1px;border-top:1px dotted #b9bfcb;"></div>
<div style="left:208px;top:170px;width:7px;height:7px"><svg width="7" height="7" viewBox="0 0 7 7"><path d="M6.5 0.5 V6.5 H0.5 Z" fill="#4a4f5c"/></svg></div>
<div style="left:227px;top:203px;width:7px;height:7px"><svg width="7" height="7" viewBox="0 0 7 7"><path d="M6.5 0.5 V6.5 H0.5 Z" fill="#4a4f5c"/></svg></div>
<div style="left:345px;top:245px;width:2px;height:2px;background:#8797bd;"></div>
<div style="left:345px;top:249px;width:2px;height:2px;background:#8797bd;"></div>
<div style="left:345px;top:253px;width:2px;height:2px;background:#8797bd;"></div>
<div style="left:345px;top:257px;width:2px;height:2px;background:#8797bd;"></div>
<div style="left:350px;top:121px;width:1097px;height:40px;background:#c9d3e5;"></div>
<div style="left:357px;top:131px;height:24px;line-height:24px;font-size:16px;color:#a4adbf;white-space:nowrap;letter-spacing:-0.073px;">Panel grupowania</div>
<div style="left:350px;top:161px;width:1097px;height:26px;background:linear-gradient(#e8ebf2 0%,#e2e6ee 48%,#d8dde8 52%,#d6dbe7 100%);"></div>
<div style="left:350px;top:161px;width:1097px;height:1px;background:#aeb8cc;"></div>
<div style="left:361px;top:163px;width:1px;height:23px;background:#e9ecf3;"></div>
<div style="left:360px;top:163px;width:1px;height:23px;background:#cfd5e1;"></div>
<div style="left:364px;top:163px;height:26px;line-height:26px;font-size:16px;color:#4b566f;white-space:nowrap;">Id</div>
<div style="left:408px;top:163px;width:1px;height:23px;background:#e9ecf3;"></div>
<div style="left:407px;top:163px;width:1px;height:23px;background:#cfd5e1;"></div>
<div style="left:411px;top:163px;height:26px;line-height:26px;font-size:16px;color:#4b566f;white-space:nowrap;letter-spacing:0.266px;">Kod</div>
<div style="left:527px;top:163px;width:1px;height:23px;background:#e9ecf3;"></div>
<div style="left:526px;top:163px;width:1px;height:23px;background:#cfd5e1;"></div>
<div style="left:530px;top:163px;height:26px;line-height:26px;font-size:16px;color:#4b566f;white-space:nowrap;letter-spacing:-0.227px;">Nazwa</div>
<div style="left:831px;top:163px;width:1px;height:23px;background:#e9ecf3;"></div>
<div style="left:830px;top:163px;width:1px;height:23px;background:#cfd5e1;"></div>
<div style="left:834px;top:163px;height:26px;line-height:26px;font-size:16px;color:#4b566f;white-space:nowrap;letter-spacing:0.102px;">Typ</div>
<div style="left:893px;top:163px;width:1px;height:23px;background:#e9ecf3;"></div>
<div style="left:892px;top:163px;width:1px;height:23px;background:#cfd5e1;"></div>
<div style="left:896px;top:163px;height:26px;line-height:26px;font-size:16px;color:#4b566f;white-space:nowrap;letter-spacing:0.055px;">J..</div>
<div style="left:916px;top:163px;width:1px;height:23px;background:#e9ecf3;"></div>
<div style="left:915px;top:163px;width:1px;height:23px;background:#cfd5e1;"></div>
<div style="left:919px;top:163px;height:26px;line-height:26px;font-size:16px;color:#4b566f;white-space:nowrap;letter-spacing:0.137px;">Ni...</div>
<div style="left:956px;top:163px;width:1px;height:23px;background:#e9ecf3;"></div>
<div style="left:955px;top:163px;width:1px;height:23px;background:#cfd5e1;"></div>
<div style="left:959px;top:163px;height:26px;line-height:26px;font-size:16px;color:#4b566f;white-space:nowrap;letter-spacing:-0.381px;">Baz...</div>
<div style="left:1004px;top:163px;width:1px;height:23px;background:#e9ecf3;"></div>
<div style="left:1003px;top:163px;width:1px;height:23px;background:#cfd5e1;"></div>
<div style="left:1007px;top:163px;height:26px;line-height:26px;font-size:16px;color:#4b566f;white-space:nowrap;letter-spacing:0.682px;">P...</div>
<div style="left:1037px;top:163px;width:1px;height:23px;background:#e9ecf3;"></div>
<div style="left:1036px;top:163px;width:1px;height:23px;background:#cfd5e1;"></div>
<div style="left:1040px;top:163px;height:26px;line-height:26px;font-size:16px;color:#4b566f;white-space:nowrap;letter-spacing:0.219px;">K..</div>
<div style="left:1060px;top:163px;width:1px;height:23px;background:#e9ecf3;"></div>
<div style="left:1059px;top:163px;width:1px;height:23px;background:#cfd5e1;"></div>
<div style="left:1063px;top:163px;height:26px;line-height:26px;font-size:16px;color:#4b566f;white-space:nowrap;letter-spacing:0.219px;">K..</div>
<div style="left:1083px;top:163px;width:1px;height:23px;background:#e9ecf3;"></div>
<div style="left:1082px;top:163px;width:1px;height:23px;background:#cfd5e1;"></div>
<div style="left:1086px;top:163px;height:26px;line-height:26px;font-size:16px;color:#4b566f;white-space:nowrap;letter-spacing:0.219px;">E..</div>
<div style="left:1106px;top:163px;width:1px;height:23px;background:#e9ecf3;"></div>
<div style="left:1105px;top:163px;width:1px;height:23px;background:#cfd5e1;"></div>
<div style="left:1109px;top:163px;height:26px;line-height:26px;font-size:16px;color:#4b566f;white-space:nowrap;letter-spacing:0.180px;">MP...</div>
<div style="left:1155px;top:163px;width:1px;height:23px;background:#e9ecf3;"></div>
<div style="left:1154px;top:163px;width:1px;height:23px;background:#cfd5e1;"></div>
<div style="left:1158px;top:163px;height:26px;line-height:26px;font-size:16px;color:#4b566f;white-space:nowrap;transform:scaleX(0.8902);transform-origin:left center;">G..</div>
<div style="left:1177px;top:163px;width:1px;height:23px;background:#e9ecf3;"></div>
<div style="left:1176px;top:163px;width:1px;height:23px;background:#cfd5e1;"></div>
<div style="left:1180px;top:163px;height:26px;line-height:26px;font-size:16px;color:#4b566f;white-space:nowrap;transform:scaleX(0.8653);transform-origin:left center;">MPK</div>
<div style="left:816px;top:172px;width:9px;height:5px"><svg width="9" height="5" viewBox="0 0 9 5"><path d="M0 0 H9 L4.5 5 Z" fill="#8f96a6"/></svg></div>
<div class="dj" style="left:350px;top:164px;height:22px;line-height:22px;font-size:9px;color:#222;white-space:nowrap;width:11px;text-align:center;overflow:hidden;">✻</div>
<div style="left:350px;top:187px;width:1097px;height:23px;background:#eef5ee;"></div>
<div style="left:350px;top:187px;width:11px;height:23px;background:linear-gradient(90deg,#e9ecf2,#dde2ec);"></div>
<div style="left:352px;top:195px;width:5px;height:9px"><svg width="5" height="9" viewBox="0 0 5 9"><circle cx="2.5" cy="2.5" r="2" fill="#222"/><circle cx="2.5" cy="2.3" r=".8" fill="#fff"/><path d="M2.5 4 V9" stroke="#222" stroke-width="1"/></svg></div>
<div style="left:830px;top:188px;height:23px;line-height:23px;font-size:16px;color:#7e7e80;white-space:nowrap;letter-spacing:0.219px;">kliknij aby dodać filtr</div>
<div style="left:350px;top:210px;width:1097px;height:2px;background:#a9b5ca;"></div>
<div style="left:361px;top:212px;width:1086px;height:23px;background:#f4f6fa;"></div>
<div style="left:350px;top:212px;width:11px;height:23px;background:linear-gradient(90deg,#eceff4,#dfe3ec);border-bottom:1px solid #d3d8e3;box-sizing:border-box;"></div>
<div style="left:363px;top:212px;height:23px;line-height:23px;font-size:16px;color:#141a30;white-space:nowrap;width:44px;text-align:right;overflow:hidden;line-height:25px;">1671</div>
<div style="left:411px;top:212px;height:23px;line-height:23px;font-size:16px;color:#141a30;white-space:nowrap;letter-spacing:-0.017px;line-height:25px;overflow:hidden;">Gałka z tworz...</div>
<div style="left:530px;top:212px;height:23px;line-height:23px;font-size:16px;color:#141a30;white-space:nowrap;letter-spacing:-0.092px;line-height:25px;overflow:hidden;">Gałka z tworzywa</div>
<div style="left:836px;top:215px;width:14px;height:15px"><svg width="14" height="15" viewBox="0 0 16 16" preserveAspectRatio="none"><rect x="1" y="0.8" width="14.2" height="14.8" rx="2.2" fill="#0c1a5a"/><rect x="3.6" y="1.8" width="10.6" height="12.6" rx="1" fill="url(#gskl)"/><rect x="3.6" y="1.8" width="10.6" height="2" rx="1" fill="#a8dcfa"/><rect x="2" y="2" width="1.2" height="12" fill="#2a3a8a"/></svg></div>
<div style="left:855px;top:212px;height:23px;line-height:23px;font-size:16px;color:#141a30;white-space:nowrap;line-height:25px;overflow:hidden;">Skł...</div>
<div style="left:896px;top:212px;height:23px;line-height:23px;font-size:16px;color:#141a30;white-space:nowrap;letter-spacing:-0.227px;line-height:25px;overflow:hidden;">szt</div>
<div style="left:961px;top:212px;height:23px;line-height:23px;font-size:16px;color:#141a30;white-space:nowrap;width:42px;text-align:right;overflow:hidden;line-height:25px;">0</div>
<div style="left:1062px;top:212px;height:23px;line-height:23px;font-size:16px;color:#141a30;white-space:nowrap;transform:scaleX(0.9194);transform-origin:left center;line-height:25px;overflow:hidden;">PL</div>
<div style="left:1085px;top:214px;width:19px;height:19px;background:#fff;border:1px solid #1a1a1a;box-sizing:border-box;"></div>
<div style="left:1123px;top:217px;width:15px;height:14px;background:linear-gradient(#e4e7ee,#d2d7e1);border:1px solid #b0b8c8;box-sizing:border-box;"></div>
<div style="left:361px;top:235px;width:1086px;height:23px;background:#edf5ed;"></div>
<div style="left:350px;top:235px;width:11px;height:23px;background:linear-gradient(90deg,#eceff4,#dfe3ec);border-bottom:1px solid #d3d8e3;box-sizing:border-box;"></div>
<div style="left:363px;top:235px;height:23px;line-height:23px;font-size:16px;color:#141a30;white-space:nowrap;width:44px;text-align:right;overflow:hidden;line-height:25px;">1672</div>
<div style="left:411px;top:235px;height:23px;line-height:23px;font-size:16px;color:#141a30;white-space:nowrap;letter-spacing:-0.132px;line-height:25px;overflow:hidden;">Gałka metalowa</div>
<div style="left:530px;top:235px;height:23px;line-height:23px;font-size:16px;color:#141a30;white-space:nowrap;letter-spacing:-0.132px;line-height:25px;overflow:hidden;">Gałka metalowa</div>
<div style="left:836px;top:238px;width:14px;height:15px"><svg width="14" height="15" viewBox="0 0 16 16" preserveAspectRatio="none"><rect x="1" y="0.8" width="14.2" height="14.8" rx="2.2" fill="#0c1a5a"/><rect x="3.6" y="1.8" width="10.6" height="12.6" rx="1" fill="url(#gskl)"/><rect x="3.6" y="1.8" width="10.6" height="2" rx="1" fill="#a8dcfa"/><rect x="2" y="2" width="1.2" height="12" fill="#2a3a8a"/></svg></div>
<div style="left:855px;top:235px;height:23px;line-height:23px;font-size:16px;color:#141a30;white-space:nowrap;line-height:25px;overflow:hidden;">Skł...</div>
<div style="left:896px;top:235px;height:23px;line-height:23px;font-size:16px;color:#141a30;white-space:nowrap;letter-spacing:-0.227px;line-height:25px;overflow:hidden;">szt</div>
<div style="left:961px;top:235px;height:23px;line-height:23px;font-size:16px;color:#141a30;white-space:nowrap;width:42px;text-align:right;overflow:hidden;line-height:25px;">0</div>
<div style="left:1062px;top:235px;height:23px;line-height:23px;font-size:16px;color:#141a30;white-space:nowrap;transform:scaleX(0.9194);transform-origin:left center;line-height:25px;overflow:hidden;">PL</div>
<div style="left:1085px;top:237px;width:19px;height:19px;background:#fff;border:1px solid #1a1a1a;box-sizing:border-box;"></div>
<div style="left:1123px;top:240px;width:15px;height:14px;background:linear-gradient(#e4e7ee,#d2d7e1);border:1px solid #b0b8c8;box-sizing:border-box;"></div>
<div style="left:361px;top:258px;width:1086px;height:23px;background:#f4f6fa;"></div>
<div style="left:350px;top:258px;width:11px;height:23px;background:linear-gradient(90deg,#eceff4,#dfe3ec);border-bottom:1px solid #d3d8e3;box-sizing:border-box;"></div>
<div style="left:363px;top:258px;height:23px;line-height:23px;font-size:16px;color:#141a30;white-space:nowrap;width:44px;text-align:right;overflow:hidden;line-height:25px;">1670</div>
<div style="left:411px;top:258px;height:23px;line-height:23px;font-size:16px;color:#141a30;white-space:nowrap;letter-spacing:-0.041px;line-height:25px;overflow:hidden;">Gałka drewnia...</div>
<div style="left:530px;top:258px;height:23px;line-height:23px;font-size:16px;color:#141a30;white-space:nowrap;letter-spacing:-0.148px;line-height:25px;overflow:hidden;">Gałka drewniana</div>
<div style="left:836px;top:261px;width:14px;height:15px"><svg width="14" height="15" viewBox="0 0 16 16" preserveAspectRatio="none"><rect x="1" y="0.8" width="14.2" height="14.8" rx="2.2" fill="#0c1a5a"/><rect x="3.6" y="1.8" width="10.6" height="12.6" rx="1" fill="url(#gskl)"/><rect x="3.6" y="1.8" width="10.6" height="2" rx="1" fill="#a8dcfa"/><rect x="2" y="2" width="1.2" height="12" fill="#2a3a8a"/></svg></div>
<div style="left:855px;top:258px;height:23px;line-height:23px;font-size:16px;color:#141a30;white-space:nowrap;line-height:25px;overflow:hidden;">Skł...</div>
<div style="left:896px;top:258px;height:23px;line-height:23px;font-size:16px;color:#141a30;white-space:nowrap;letter-spacing:-0.227px;line-height:25px;overflow:hidden;">szt</div>
<div style="left:961px;top:258px;height:23px;line-height:23px;font-size:16px;color:#141a30;white-space:nowrap;width:42px;text-align:right;overflow:hidden;line-height:25px;">0</div>
<div style="left:1062px;top:258px;height:23px;line-height:23px;font-size:16px;color:#141a30;white-space:nowrap;transform:scaleX(0.9194);transform-origin:left center;line-height:25px;overflow:hidden;">PL</div>
<div style="left:1085px;top:260px;width:19px;height:19px;background:#fff;border:1px solid #1a1a1a;box-sizing:border-box;"></div>
<div style="left:1123px;top:263px;width:15px;height:14px;background:linear-gradient(#e4e7ee,#d2d7e1);border:1px solid #b0b8c8;box-sizing:border-box;"></div>
<div style="left:361px;top:281px;width:1086px;height:23px;background:#edf5ed;"></div>
<div style="left:350px;top:281px;width:11px;height:23px;background:linear-gradient(90deg,#eceff4,#dfe3ec);border-bottom:1px solid #d3d8e3;box-sizing:border-box;"></div>
<div style="left:363px;top:281px;height:23px;line-height:23px;font-size:16px;color:#141a30;white-space:nowrap;width:44px;text-align:right;overflow:hidden;line-height:25px;">1698</div>
<div style="left:411px;top:281px;height:23px;line-height:23px;font-size:16px;color:#141a30;white-space:nowrap;letter-spacing:-0.045px;line-height:25px;overflow:hidden;">Fotel-pufa skó...</div>
<div style="left:530px;top:281px;height:23px;line-height:23px;font-size:16px;color:#141a30;white-space:nowrap;letter-spacing:-0.134px;line-height:25px;overflow:hidden;">Fotel-pufa skórzana</div>
<div style="left:836px;top:284px;width:14px;height:15px"><svg width="14" height="15" viewBox="0 0 16 16" preserveAspectRatio="none"><path d="M1.6 3 V11.8 C1.6 13 3.6 13.8 6.2 13.8 C8.8 13.8 10.8 13 10.8 11.8 V3 Z" fill="url(#gprod)" stroke="#b4461a" stroke-width="1"/><ellipse cx="6.2" cy="3" rx="4.6" ry="2" fill="#fbd46a" stroke="#b4461a" stroke-width="1"/><path d="M3.4 5.2 V12.8" stroke="#fde8a8" stroke-width="1.2"/><circle cx="11.4" cy="12.2" r="2.7" fill="#eef1fa" stroke="#2a3aa8" stroke-width="1.2" stroke-dasharray="1.3 .8"/><circle cx="11.4" cy="12.2" r=".9" fill="#2a3aa8"/></svg></div>
<div style="left:855px;top:281px;height:23px;line-height:23px;font-size:16px;color:#141a30;white-space:nowrap;line-height:25px;overflow:hidden;">Pr...</div>
<div style="left:896px;top:281px;height:23px;line-height:23px;font-size:16px;color:#141a30;white-space:nowrap;letter-spacing:-0.227px;line-height:25px;overflow:hidden;">szt</div>
<div style="left:961px;top:281px;height:23px;line-height:23px;font-size:16px;color:#141a30;white-space:nowrap;width:42px;text-align:right;overflow:hidden;line-height:25px;">0</div>
<div style="left:1014px;top:285px;width:15px;height:15px"><svg width="15" height="15" viewBox="0 0 16 16" preserveAspectRatio="none"><rect x="0.8" y="0.8" width="8.8" height="8.8" rx="1.6" fill="#a8cf2a" stroke="#4f7f12" stroke-width="1"/><rect x="1.8" y="1.8" width="6.8" height="2.8" rx="1" fill="#d8ee7a" opacity=".8"/><rect x="6.4" y="6.4" width="8.8" height="8.8" rx="1.6" fill="#8cc428" stroke="#3f7410" stroke-width="1"/><rect x="7.4" y="7.4" width="6.8" height="2.8" rx="1" fill="#c8e86a" opacity=".8"/></svg></div>
<div style="left:1062px;top:281px;height:23px;line-height:23px;font-size:16px;color:#141a30;white-space:nowrap;transform:scaleX(0.9194);transform-origin:left center;line-height:25px;overflow:hidden;">PL</div>
<div style="left:1085px;top:283px;width:19px;height:19px;background:#fff;border:1px solid #1a1a1a;box-sizing:border-box;"></div>
<div style="left:1123px;top:286px;width:15px;height:14px;background:linear-gradient(#e4e7ee,#d2d7e1);border:1px solid #b0b8c8;box-sizing:border-box;"></div>
<div style="left:361px;top:304px;width:1086px;height:23px;background:#fde7a4;"></div>
<div style="left:350px;top:304px;width:11px;height:23px;background:linear-gradient(90deg,#eceff4,#dfe3ec);border-bottom:1px solid #d3d8e3;box-sizing:border-box;"></div>
<div style="left:363px;top:304px;height:23px;line-height:23px;font-size:16px;color:#141a30;white-space:nowrap;width:44px;text-align:right;overflow:hidden;line-height:25px;">1697</div>
<div style="left:411px;top:304px;height:23px;line-height:23px;font-size:16px;color:#141a30;white-space:nowrap;letter-spacing:-0.055px;line-height:25px;overflow:hidden;">Fotel-Pufa ma...</div>
<div style="left:530px;top:304px;height:23px;line-height:23px;font-size:16px;color:#141a30;white-space:nowrap;letter-spacing:-0.030px;line-height:25px;overflow:hidden;">Fotel-Pufa materiałowy</div>
<div style="left:836px;top:307px;width:14px;height:15px"><svg width="14" height="15" viewBox="0 0 16 16" preserveAspectRatio="none"><path d="M1.6 3 V11.8 C1.6 13 3.6 13.8 6.2 13.8 C8.8 13.8 10.8 13 10.8 11.8 V3 Z" fill="url(#gprod)" stroke="#b4461a" stroke-width="1"/><ellipse cx="6.2" cy="3" rx="4.6" ry="2" fill="#fbd46a" stroke="#b4461a" stroke-width="1"/><path d="M3.4 5.2 V12.8" stroke="#fde8a8" stroke-width="1.2"/><circle cx="11.4" cy="12.2" r="2.7" fill="#eef1fa" stroke="#2a3aa8" stroke-width="1.2" stroke-dasharray="1.3 .8"/><circle cx="11.4" cy="12.2" r=".9" fill="#2a3aa8"/></svg></div>
<div style="left:855px;top:304px;height:23px;line-height:23px;font-size:16px;color:#141a30;white-space:nowrap;line-height:25px;overflow:hidden;">Pr...</div>
<div style="left:896px;top:304px;height:23px;line-height:23px;font-size:16px;color:#141a30;white-space:nowrap;letter-spacing:-0.227px;line-height:25px;overflow:hidden;">szt</div>
<div style="left:961px;top:304px;height:23px;line-height:23px;font-size:16px;color:#141a30;white-space:nowrap;width:42px;text-align:right;overflow:hidden;line-height:25px;">0</div>
<div style="left:1014px;top:308px;width:15px;height:15px"><svg width="15" height="15" viewBox="0 0 16 16" preserveAspectRatio="none"><rect x="0.8" y="0.8" width="8.8" height="8.8" rx="1.6" fill="#a8cf2a" stroke="#4f7f12" stroke-width="1"/><rect x="1.8" y="1.8" width="6.8" height="2.8" rx="1" fill="#d8ee7a" opacity=".8"/><rect x="6.4" y="6.4" width="8.8" height="8.8" rx="1.6" fill="#8cc428" stroke="#3f7410" stroke-width="1"/><rect x="7.4" y="7.4" width="6.8" height="2.8" rx="1" fill="#c8e86a" opacity=".8"/></svg></div>
<div style="left:1062px;top:304px;height:23px;line-height:23px;font-size:16px;color:#141a30;white-space:nowrap;transform:scaleX(0.9194);transform-origin:left center;line-height:25px;overflow:hidden;">PL</div>
<div style="left:1085px;top:306px;width:19px;height:19px;background:#fff;border:1px solid #1a1a1a;box-sizing:border-box;"></div>
<div style="left:1123px;top:309px;width:15px;height:14px;background:linear-gradient(#e4e7ee,#d2d7e1);border:1px solid #b0b8c8;box-sizing:border-box;"></div>
<div style="left:361px;top:327px;width:1086px;height:19px;background:#edf5ed;"></div>
<div style="left:350px;top:327px;width:11px;height:19px;background:linear-gradient(90deg,#eceff4,#dfe3ec);border-bottom:1px solid #d3d8e3;box-sizing:border-box;"></div>
<div style="left:363px;top:327px;height:19px;line-height:19px;font-size:16px;color:#141a30;white-space:nowrap;width:44px;text-align:right;overflow:hidden;line-height:25px;">28</div>
<div style="left:411px;top:327px;height:19px;line-height:19px;font-size:16px;color:#141a30;white-space:nowrap;letter-spacing:-0.156px;line-height:25px;overflow:hidden;">Fotel Neapol</div>
<div style="left:530px;top:327px;height:19px;line-height:19px;font-size:16px;color:#141a30;white-space:nowrap;letter-spacing:-0.156px;line-height:25px;overflow:hidden;">Fotel Neapol</div>
<div style="left:836px;top:330px;width:14px;height:15px"><svg width="14" height="15" viewBox="0 0 16 16" preserveAspectRatio="none"><path d="M1.6 3 V11.8 C1.6 13 3.6 13.8 6.2 13.8 C8.8 13.8 10.8 13 10.8 11.8 V3 Z" fill="url(#gprod)" stroke="#b4461a" stroke-width="1"/><ellipse cx="6.2" cy="3" rx="4.6" ry="2" fill="#fbd46a" stroke="#b4461a" stroke-width="1"/><path d="M3.4 5.2 V12.8" stroke="#fde8a8" stroke-width="1.2"/><circle cx="11.4" cy="12.2" r="2.7" fill="#eef1fa" stroke="#2a3aa8" stroke-width="1.2" stroke-dasharray="1.3 .8"/><circle cx="11.4" cy="12.2" r=".9" fill="#2a3aa8"/></svg></div>
<div style="left:855px;top:327px;height:19px;line-height:19px;font-size:16px;color:#141a30;white-space:nowrap;line-height:25px;overflow:hidden;">Pr...</div>
<div style="left:896px;top:327px;height:19px;line-height:19px;font-size:16px;color:#141a30;white-space:nowrap;letter-spacing:-0.227px;line-height:25px;overflow:hidden;">szt</div>
<div style="left:961px;top:327px;height:19px;line-height:19px;font-size:16px;color:#141a30;white-space:nowrap;width:42px;text-align:right;overflow:hidden;line-height:25px;">0</div>
<div style="left:1014px;top:331px;width:15px;height:15px"><svg width="15" height="15" viewBox="0 0 16 16" preserveAspectRatio="none"><rect x="0.8" y="0.8" width="8.8" height="8.8" rx="1.6" fill="#a8cf2a" stroke="#4f7f12" stroke-width="1"/><rect x="1.8" y="1.8" width="6.8" height="2.8" rx="1" fill="#d8ee7a" opacity=".8"/><rect x="6.4" y="6.4" width="8.8" height="8.8" rx="1.6" fill="#8cc428" stroke="#3f7410" stroke-width="1"/><rect x="7.4" y="7.4" width="6.8" height="2.8" rx="1" fill="#c8e86a" opacity=".8"/></svg></div>
<div style="left:1062px;top:327px;height:19px;line-height:19px;font-size:16px;color:#141a30;white-space:nowrap;transform:scaleX(0.9194);transform-origin:left center;line-height:25px;overflow:hidden;">PL</div>
<div style="left:1085px;top:329px;width:19px;height:17px;background:#fff;border:1px solid #1a1a1a;box-sizing:border-box;border-bottom:none;"></div>
<div style="left:1123px;top:332px;width:15px;height:14px;background:linear-gradient(#e4e7ee,#d2d7e1);border:1px solid #b0b8c8;box-sizing:border-box;"></div>
<div style="left:361px;top:304px;width:1086px;height:23px;border:1px dotted #3a3a3a;box-sizing:border-box;"></div>
<div style="left:353px;top:311px;width:5px;height:9px"><svg width="5" height="9" viewBox="0 0 5 9"><path d="M0.5 0.5 L4.5 4.5 L0.5 8.5 Z" fill="#222"/></svg></div>
<div style="left:350px;top:346px;width:1097px;height:38px;background:linear-gradient(#eceef3 0%,#e4e7ee 45%,#dadfe9 55%,#dbe0ea 100%);border-top:1px solid #b4bdce;box-sizing:border-box;"></div>
<div style="left:363px;top:350px;width:45px;height:32px;background:#fff;border:1px solid #c9cfdb;border-radius:2px;box-sizing:border-box;"></div>
<div style="left:375px;top:352px;height:30px;line-height:30px;font-size:16px;color:#141a30;white-space:nowrap;width:26px;text-align:left;overflow:hidden;text-overflow:clip;letter-spacing:.6px;">409</div>
<div style="left:411px;top:350px;width:114px;height:32px;background:#fff;border:1px solid #c9cfdb;border-radius:2px;box-sizing:border-box;"></div>
<div style="left:423px;top:352px;height:30px;line-height:30px;font-size:16px;color:#141a30;white-space:nowrap;letter-spacing:-0.005px;">409 pozycji</div>
<div style="left:1447px;top:121px;width:18px;height:263px;background:linear-gradient(90deg,#e4e6ea,#ebecee 30%,#e9eaed);"></div>
<div style="left:1452px;top:127px;width:8px;height:5px"><svg width="8" height="5" viewBox="0 0 8 5"><path d="M0 5 H8 L4 0 Z" fill="#7f8a9f"/></svg></div>
<div style="left:1452px;top:375px;width:8px;height:5px"><svg width="8" height="5" viewBox="0 0 8 5"><path d="M0 0 H8 L4 5 Z" fill="#7f8a9f"/></svg></div>
<div style="left:1449px;top:303px;width:14px;height:15px;background:linear-gradient(#f4f6f9,#dfe3ec);border:1px solid #9aa4ba;border-radius:2px;box-sizing:border-box;"></div>
<div style="left:1452px;top:306px;width:8px;height:2px;background:#6f7688;"></div>
<div style="left:1452px;top:309px;width:8px;height:2px;background:#6f7688;"></div>
<div style="left:1452px;top:312px;width:8px;height:2px;background:#6f7688;"></div>
<div style="left:344px;top:302px;width:775px;height:28px;border:2px solid #ec1a22;border-radius:7px;box-sizing:border-box;box-shadow:0 1px 3px rgba(90,0,0,.25);"></div>
<div style="left:826px;top:387px;width:2px;height:2px;background:#7787ae;"></div>
<div style="left:830px;top:387px;width:2px;height:2px;background:#7787ae;"></div>
<div style="left:834px;top:387px;width:2px;height:2px;background:#7787ae;"></div>
<div style="left:838px;top:387px;width:2px;height:2px;background:#7787ae;"></div>
<div style="left:206px;top:392px;width:117px;height:26px;background:linear-gradient(#e6eaf2 0%,#dfe4ee 48%,#d1d9e7 52%,#cad3e3 100%);border:1px solid #98a4bb;border-bottom:none;border-radius:3px 3px 0 0;box-sizing:border-box;box-shadow:inset 1px 1px 0 rgba(255,255,255,.7);"></div>
<div style="left:240px;top:397px;width:16px;height:16px"><svg width="16" height="16" viewBox="0 0 16 16" preserveAspectRatio="none"><rect x="0.8" y="2" width="10.8" height="4.6" rx="2.3" fill="#c4e2fb" stroke="#2f6fdc" stroke-width="1.2"/><rect x="3" y="8.4" width="12.2" height="4.8" rx="2.4" fill="#c4e2fb" stroke="#2f6fdc" stroke-width="1.2"/></svg></div>
<div style="left:261.2px;top:393px;height:26px;line-height:26px;font-size:11px;color:#141c34;white-space:nowrap;letter-spacing:-0.194px;">Sztuki</div>
<div style="left:325px;top:392px;width:245px;height:26px;background:linear-gradient(#e6eaf2 0%,#dfe4ee 48%,#d1d9e7 52%,#cad3e3 100%);border:1px solid #98a4bb;border-bottom:none;border-radius:3px 3px 0 0;box-sizing:border-box;box-shadow:inset 1px 1px 0 rgba(255,255,255,.7);"></div>
<div style="left:386px;top:397px;width:16px;height:16px"><svg width="16" height="16" viewBox="0 0 16 16" preserveAspectRatio="none"><rect x="1.6" y="5.4" width="5" height="5" rx="1.6" fill="#fff" stroke="#2f80e6" stroke-width="1.5"/><rect x="8.4" y="4.6" width="6.2" height="6.2" rx="2.2" fill="#fff" stroke="#141c7a" stroke-width="1.6"/><path d="M6.8 8 H8.4" stroke="#141c7a" stroke-width="1.3"/></svg></div>
<div style="left:407.8px;top:393px;height:26px;line-height:26px;font-size:11px;color:#141c34;white-space:nowrap;letter-spacing:-0.175px;">Czynności serwisowe</div>
<div style="left:572px;top:392px;width:243px;height:26px;background:linear-gradient(#e6eaf2 0%,#dfe4ee 48%,#d1d9e7 52%,#cad3e3 100%);border:1px solid #98a4bb;border-bottom:none;border-radius:3px 3px 0 0;box-sizing:border-box;box-shadow:inset 1px 1px 0 rgba(255,255,255,.7);"></div>
<div style="left:633px;top:397px;width:16px;height:16px"><svg width="16" height="16" viewBox="0 0 16 16" preserveAspectRatio="none"><rect x="2" y="0.8" width="12" height="14.6" rx="1.6" fill="#fdfdfe" stroke="#2a3aa6" stroke-width="1"/><path d="M2.6 7 L5.4 5 L7.8 7 L10.4 4.8 L13.4 6.6 M2.6 10.6 L5.4 8.6 L7.8 10.6 L10.4 8.4 L13.4 10.2" fill="none" stroke="#d8202a" stroke-width="1.2"/></svg></div>
<div style="left:654.2px;top:393px;height:26px;line-height:26px;font-size:11px;color:#141c34;white-space:nowrap;letter-spacing:0.007px;">Historia asortymentu</div>
<div style="left:817px;top:392px;width:134px;height:26px;background:linear-gradient(#e6eaf2 0%,#dfe4ee 48%,#d1d9e7 52%,#cad3e3 100%);border:1px solid #98a4bb;border-bottom:none;border-radius:3px 3px 0 0;box-sizing:border-box;box-shadow:inset 1px 1px 0 rgba(255,255,255,.7);"></div>
<div style="left:854px;top:397px;width:16px;height:16px"><svg width="16" height="16" viewBox="0 0 16 16" preserveAspectRatio="none"><circle cx="8" cy="8" r="6.3" fill="#fdfdfd" stroke="#c62a20" stroke-width="2.7"/><circle cx="8" cy="8" r="6.6" fill="none" stroke="#f0a098" stroke-width=".7" opacity=".8"/><path d="M5.6 6.2 L9.6 6.2 L9.6 10.2" fill="none" stroke="#222" stroke-width="1.3"/></svg></div>
<div style="left:875.8px;top:393px;height:26px;line-height:26px;font-size:11px;color:#141c34;white-space:nowrap;letter-spacing:-0.128px;">Zadania</div>
<div style="left:953px;top:392px;width:224px;height:26px;background:linear-gradient(#e6eaf2 0%,#dfe4ee 48%,#d1d9e7 52%,#cad3e3 100%);border:1px solid #98a4bb;border-bottom:none;border-radius:3px 3px 0 0;box-sizing:border-box;box-shadow:inset 1px 1px 0 rgba(255,255,255,.7);"></div>
<div style="left:1010px;top:397px;width:16px;height:16px"><svg width="16" height="16" viewBox="0 0 16 16" preserveAspectRatio="none"><rect x="1" y="1" width="9.6" height="9.6" rx="1" fill="#e8ecf4" stroke="#8a98b8" stroke-width=".7"/><rect x="4.4" y="4.4" width="10" height="10" rx="1.2" fill="#f0a83a" stroke="#c07a18" stroke-width=".8"/><rect x="5.4" y="5.4" width="8" height="3" fill="#f8c66c" opacity=".8"/></svg></div>
<div style="left:1031.2px;top:393px;height:26px;line-height:26px;font-size:11px;color:#141c34;white-space:nowrap;letter-spacing:-0.155px;">Elementy końcowe</div>
<div style="left:1179px;top:392px;width:148px;height:26px;background:linear-gradient(#e6eaf2 0%,#dfe4ee 48%,#d1d9e7 52%,#cad3e3 100%);border:1px solid #98a4bb;border-bottom:none;border-radius:3px 3px 0 0;box-sizing:border-box;box-shadow:inset 1px 1px 0 rgba(255,255,255,.7);"></div>
<div style="left:1219px;top:397px;width:16px;height:16px"><svg width="16" height="16" viewBox="0 0 16 16" preserveAspectRatio="none"><path d="M1 3.6 L4.6 0.6 V8.6 H1 Z" fill="#3aa02c" stroke="#1f6a14" stroke-width=".5"/><rect x="3" y="3.6" width="5.4" height="5" fill="#5ac03a" stroke="#1f6a14" stroke-width=".5"/><ellipse cx="11.6" cy="6" rx="3.2" ry="4.4" fill="#f08020" stroke="#a84a10" stroke-width=".6"/><path d="M10.6 4 C12 3 13 4.4 11.6 6 C10.4 7.4 11.6 8.4 12.6 7.6" fill="none" stroke="#fff" stroke-width=".9"/><rect x="1.6" y="10" width="7" height="5" rx="1" fill="#f4f4f4" stroke="#6a6a6a" stroke-width=".6"/><rect x="9.6" y="10.6" width="5" height="4.6" fill="#e8d44a" stroke="#8a7a1a" stroke-width=".6"/></svg></div>
<div style="left:1240.8px;top:393px;height:26px;line-height:26px;font-size:11px;color:#141c34;white-space:nowrap;letter-spacing:-0.212px;">Załączniki</div>
<div style="left:1329px;top:392px;width:131px;height:26px;background:linear-gradient(#e6eaf2 0%,#dfe4ee 48%,#d1d9e7 52%,#cad3e3 100%);border:1px solid #98a4bb;border-bottom:none;border-radius:3px 3px 0 0;box-sizing:border-box;box-shadow:inset 1px 1px 0 rgba(255,255,255,.7);"></div>
<div style="left:1367px;top:397px;width:16px;height:16px"><svg width="16" height="16" viewBox="0 0 16 16" preserveAspectRatio="none"><rect x="0.6" y="0.6" width="14.8" height="14.8" fill="#fdfdfd" stroke="#3a5ac8" stroke-width="1"/><rect x="2.2" y="2.2" width="11.6" height="11.6" fill="#fff" stroke="#9ab0e8" stroke-width=".5" stroke-dasharray="1 1"/><path d="M4 3.6 C6 4.2 7 5.6 8 7 C9 5.6 10 4.2 12 3.6 C12.6 6 12 7.6 11 8.4 C12 9.4 12 11.6 11 12.6 C9.6 12 8.6 10.6 8 9.6 C7.4 10.6 6.4 12 5 12.6 C4 11.6 4 9.4 5 8.4 C4 7.6 3.4 6 4 3.6 Z" fill="#111"/></svg></div>
<div style="left:1388.2px;top:393px;height:26px;line-height:26px;font-size:11px;color:#141c34;white-space:nowrap;letter-spacing:-0.078px;">Zdjęcia</div>
<div style="left:206px;top:418px;width:97px;height:27px;background:linear-gradient(#e6eaf2 0%,#dfe4ee 48%,#d1d9e7 52%,#cad3e3 100%);border:1px solid #98a4bb;border-bottom:none;border-radius:3px 3px 0 0;box-sizing:border-box;box-shadow:inset 1px 1px 0 rgba(255,255,255,.7);"></div>
<div style="left:231px;top:423px;width:16px;height:16px"><svg width="16" height="16" viewBox="0 0 16 16" preserveAspectRatio="none"><path d="M3 2 H13 V5 H11.8 L11.4 3.8 H6.4 L10 8 L6.4 12.4 H11.8 L12.4 11 H13.6 V14.2 H3 V13.2 L7.4 8 L3 3 Z" fill="#f6a81c" stroke="#d0321e" stroke-width=".9" stroke-linejoin="round"/></svg></div>
<div style="left:252.8px;top:419px;height:27px;line-height:27px;font-size:11px;color:#141c34;white-space:nowrap;letter-spacing:0.104px;">Ceny</div>
<div style="left:305px;top:418px;width:131px;height:27px;background:linear-gradient(#e6eaf2 0%,#dfe4ee 48%,#d1d9e7 52%,#cad3e3 100%);border:1px solid #98a4bb;border-bottom:none;border-radius:3px 3px 0 0;box-sizing:border-box;box-shadow:inset 1px 1px 0 rgba(255,255,255,.7);"></div>
<div style="left:337px;top:423px;width:16px;height:16px"><svg width="16" height="16" viewBox="0 0 16 16" preserveAspectRatio="none"><rect x="3.4" y="1" width="8" height="5" fill="#fdfdfd" stroke="#4a5678" stroke-width=".7"/><path d="M1 6.4 H13.4 V11.6 H1 Z" fill="#c4cce0" stroke="#2a3658" stroke-width=".7"/><rect x="3" y="9.6" width="8.4" height="5" fill="#fdfdfd" stroke="#2a3658" stroke-width=".7"/><path d="M4.4 11.4 H10 M4.4 13 H10" stroke="#1a2a6a" stroke-width=".8"/><circle cx="11.6" cy="4.4" r="3.6" fill="#7ad02c" stroke="#2f7a10" stroke-width=".6"/><path d="M10.4 3.4 C10.4 1.8 13 1.8 13 3.4 C13 4.4 11.8 4.4 11.8 5.4" fill="none" stroke="#111" stroke-width=".9"/><circle cx="11.8" cy="6.6" r=".6" fill="#111"/></svg></div>
<div style="left:358.2px;top:419px;height:27px;line-height:27px;font-size:11px;color:#141c34;white-space:nowrap;letter-spacing:-0.098px;">Dostawcy</div>
<div style="left:438px;top:418px;width:125px;height:27px;background:linear-gradient(#e6eaf2 0%,#dfe4ee 48%,#d1d9e7 52%,#cad3e3 100%);border:1px solid #98a4bb;border-bottom:none;border-radius:3px 3px 0 0;box-sizing:border-box;box-shadow:inset 1px 1px 0 rgba(255,255,255,.7);"></div>
<div style="left:468px;top:423px;width:16px;height:16px"><svg width="16" height="16" viewBox="0 0 16 16" preserveAspectRatio="none"><path d="M8 1.4 L10 5 L14.6 2.6 L12.6 7.4 L15.4 10 L11.4 10.6 L12.4 14.6 L8 12.6 L3.6 14.6 L4.6 10.6 L0.6 10 L3.4 7.4 L1.4 2.6 L6 5 Z" fill="#f0a020" stroke="#c0501a" stroke-width=".6"/><path d="M5 5.6 H11 L8 10.6 Z" fill="#fff4c0" stroke="#2a2a2a" stroke-width=".8"/><circle cx="8" cy="7.4" r="1" fill="#2a2a2a"/></svg></div>
<div style="left:489.8px;top:419px;height:27px;line-height:27px;font-size:11px;color:#141c34;white-space:nowrap;letter-spacing:-0.004px;">Odbiorcy</div>
<div style="left:565px;top:418px;width:105px;height:27px;background:linear-gradient(#e6eaf2 0%,#dfe4ee 48%,#d1d9e7 52%,#cad3e3 100%);border:1px solid #98a4bb;border-bottom:none;border-radius:3px 3px 0 0;box-sizing:border-box;box-shadow:inset 1px 1px 0 rgba(255,255,255,.7);"></div>
<div style="left:592px;top:423px;width:16px;height:16px"><svg width="16" height="16" viewBox="0 0 16 16" preserveAspectRatio="none"><path d="M8 0.8 L14.6 3.6 L8 8 Z" fill="#f08a1a"/><path d="M8 0.8 L1.4 3.6 L8 8 Z" fill="#e8188a"/><path d="M1.4 3.6 V11 L8 14 V8 Z" fill="#e8188a"/><path d="M14.6 3.6 V11 L8 14 V8 Z" fill="#f0a020"/><path d="M8 1.4 L13.6 3.8 L8 7.4 L2.4 3.8 Z" fill="#f06a2a" opacity=".0"/><path d="M3 12 L8 10.4 L13 12 L8 15.4 Z" fill="#2a9af0"/></svg></div>
<div style="left:613.2px;top:419px;height:27px;line-height:27px;font-size:11px;color:#141c34;white-space:nowrap;letter-spacing:-0.047px;">Cechy</div>
<div style="left:672px;top:418px;width:126px;height:27px;background:linear-gradient(#e6eaf2 0%,#dfe4ee 48%,#d1d9e7 52%,#cad3e3 100%);border:1px solid #98a4bb;border-bottom:none;border-radius:3px 3px 0 0;box-sizing:border-box;box-shadow:inset 1px 1px 0 rgba(255,255,255,.7);"></div>
<div style="left:702px;top:423px;width:16px;height:16px"><svg width="16" height="16" viewBox="0 0 16 16" preserveAspectRatio="none"><ellipse cx="6" cy="11.6" rx="5" ry="3" fill="#e09a18" stroke="#a86410" stroke-width=".5"/><ellipse cx="6" cy="10.2" rx="5" ry="3" fill="#f8cc3c" stroke="#a86410" stroke-width=".5"/><ellipse cx="10.6" cy="7.6" rx="4.6" ry="2.8" fill="#e09a18" stroke="#a86410" stroke-width=".5"/><ellipse cx="10.6" cy="6.2" rx="4.6" ry="2.8" fill="#f8cc3c" stroke="#a86410" stroke-width=".5"/><ellipse cx="8" cy="3.6" rx="4" ry="2.4" fill="#fbe07a" stroke="#a86410" stroke-width=".5"/><path d="M8.6 8.6 L11.6 9.8 L10.2 13.6 L8 12.4 Z" fill="#d8402a" opacity=".85"/><path d="M2 8.4 L4.6 7.2 L5 9.4 L2.6 10.6 Z" fill="#f0a020" stroke="#a86410" stroke-width=".4"/></svg></div>
<div style="left:723.2px;top:419px;height:27px;line-height:27px;font-size:11px;color:#141c34;white-space:nowrap;letter-spacing:-0.069px;">Sprzedaż</div>
<div style="left:800px;top:418px;width:135px;height:27px;background:linear-gradient(#e6eaf2 0%,#dfe4ee 48%,#d1d9e7 52%,#cad3e3 100%);border:1px solid #98a4bb;border-bottom:none;border-radius:3px 3px 0 0;box-sizing:border-box;box-shadow:inset 1px 1px 0 rgba(255,255,255,.7);"></div>
<div style="left:832px;top:423px;width:16px;height:16px"><svg width="16" height="16" viewBox="0 0 16 16" preserveAspectRatio="none"><path d="M1.6 1 L6 12.4 L8 8.6 L12.4 8 Z" fill="#fbe9b0" stroke="#d08a1a" stroke-width="1"/><path d="M14.6 3.4 L15.6 4.8 L7 12.6 L4.6 13.6 L5.6 11.2 Z" fill="#f0a020" stroke="#a85a10" stroke-width=".6"/><path d="M5.6 11.2 L7 12.6 L4.6 13.6 Z" fill="#c8281e"/><path d="M9 13 L13 15.4" stroke="#c8281e" stroke-width="1"/></svg></div>
<div style="left:853.2px;top:419px;height:27px;line-height:27px;font-size:11px;color:#141c34;white-space:nowrap;letter-spacing:0.107px;">Receptury</div>
<div style="left:937px;top:418px;width:129px;height:27px;background:linear-gradient(#fffaf0 0%,#fdf2d2 48%,#fbdf98 56%,#fbe19e 78%,#fdebb4 100%);border:1px solid #dcb868;border-bottom:none;border-radius:3px 3px 0 0;box-sizing:border-box;box-shadow:inset 1px 1px 0 rgba(255,255,255,.7);"></div>
<div style="left:969px;top:423px;width:16px;height:16px"><svg width="16" height="16" viewBox="0 0 16 16" preserveAspectRatio="none"><rect x="5.4" y="1.6" width="5.2" height="4.6" rx=".8" fill="#86c0f4" stroke="#2a6ad0" stroke-width=".9"/><path d="M8 6.2 V9 M3 11.2 V9 H13 V11.2 M8 9 V11.2" fill="none" stroke="#2a3a6a" stroke-width=".9"/><g fill="#e4f6b0" stroke="#3a9a1a" stroke-width=".9"><circle cx="3" cy="12.8" r="1.6"/><circle cx="8" cy="12.8" r="1.6"/><circle cx="13" cy="12.8" r="1.6"/></g></svg></div>
<div style="left:990.8px;top:419px;height:27px;line-height:27px;font-size:11px;color:#141c34;white-space:nowrap;letter-spacing:0.143px;">Warianty</div>
<div style="left:1068px;top:418px;width:131px;height:27px;background:linear-gradient(#e6eaf2 0%,#dfe4ee 48%,#d1d9e7 52%,#cad3e3 100%);border:1px solid #98a4bb;border-bottom:none;border-radius:3px 3px 0 0;box-sizing:border-box;box-shadow:inset 1px 1px 0 rgba(255,255,255,.7);"></div>
<div style="left:1098px;top:423px;width:16px;height:16px"><svg width="16" height="16" viewBox="0 0 16 16" preserveAspectRatio="none"><path d="M3.2 9.4 A5 5 0 0 1 10.6 4" fill="none" stroke="#4aa6ea" stroke-width="1.7"/><path d="M12.8 7.6 A5 5 0 0 1 5.4 13" fill="none" stroke="#2a86d8" stroke-width="1.7"/><path d="M9 5.8 L12.6 5 L11.2 1.8 Z" fill="#4aa6ea"/><path d="M7 11.2 L3.4 12 L4.8 15.2 Z" fill="#2a86d8"/><path d="M6 0.4 L6.9 2.3 L9 2.1 L7.5 3.5 L8.4 5.4 L6.4 4.4 L4.9 5.8 L5.2 3.8 L3.4 2.8 L5.4 2.5 Z" fill="#7ccc2c" stroke="#4a9a14" stroke-width=".3"/><path d="M12.4 9.2 L13 10.6 L14.6 10.6 L13.4 11.6 L13.8 13.2 L12.4 12.3 L11 13.2 L11.5 11.6 L10.3 10.6 L11.8 10.6 Z" fill="#f0c838" opacity=".9"/></svg></div>
<div style="left:1119.8px;top:419px;height:27px;line-height:27px;font-size:11px;color:#141c34;white-space:nowrap;letter-spacing:-0.354px;">Zamienniki</div>
<div style="left:1201px;top:418px;width:259px;height:27px;background:linear-gradient(#e6eaf2 0%,#dfe4ee 48%,#d1d9e7 52%,#cad3e3 100%);border:1px solid #98a4bb;border-bottom:none;border-radius:3px 3px 0 0;box-sizing:border-box;box-shadow:inset 1px 1px 0 rgba(255,255,255,.7);"></div>
<div style="left:1256px;top:423px;width:16px;height:16px"><svg width="16" height="16" viewBox="0 0 16 16" preserveAspectRatio="none"><circle cx="8" cy="8" r="5" fill="#fdfdfd" stroke="#4a5aa8" stroke-width="1" stroke-dasharray="1.6 1.2"/><circle cx="8" cy="8" r="2" fill="#fff" stroke="#2a3a8a" stroke-width="1"/><g fill="#1a1a2a"><circle cx="8" cy="1" r=".8"/><circle cx="8" cy="15" r=".8"/><circle cx="1" cy="8" r=".8"/><circle cx="15" cy="8" r=".8"/></g></svg></div>
<div style="left:1277.2px;top:419px;height:27px;line-height:27px;font-size:11px;color:#141c34;white-space:nowrap;letter-spacing:-0.021px;">Wykorzystanie w produkcji</div>
<div style="left:202px;top:444px;width:1262px;height:4px;background:#fee8a3;border-radius:3px 3px 0 0;"></div>
<div style="left:936px;top:418px;width:132px;height:29px;border:2px solid #ec1a22;border-radius:7px;box-sizing:border-box;box-shadow:0 1px 3px rgba(90,0,0,.25);"></div>
<div style="left:210px;top:455px;width:16px;height:16px"><svg width="16" height="16" viewBox="0 0 16 16" preserveAspectRatio="none"><path d="M1 5.6 L5 0.9 H11 C11.8 0.9 12.3 1.4 12.3 2.2 V13.6 C12.3 14.5 11.8 15 11 15 H2.6 C1.6 15 1 14.5 1 13.6 Z" fill="#fcfdfe" stroke="#aab0be" stroke-width=".5"/><path d="M1 5.6 L5 0.9 V4.4 C5 5.2 4.6 5.6 3.8 5.6 Z" fill="#d9dde6" stroke="#aab0be" stroke-width=".4"/><path d="M11.4 1.4 L14.9 4.2 L7.6 12 L4.8 9.4 Z" fill="#1f8ae6" stroke="#1565b8" stroke-width=".4"/><path d="M12 2.6 L13.6 3.9 L7.4 10.6 L6 9.4 Z" fill="#58aef2" opacity=".75"/><path d="M12.6 0.3 L15.7 2.8 L14.9 4.2 L11.4 1.4 Z" fill="#4a4f58"/><path d="M4.8 9.4 L7.6 12 L3.4 13.2 Z" fill="#8a8f98"/><path d="M4 11.6 L5 12.7 L3.4 13.2 Z" fill="#222"/></svg></div>
<div style="left:211px;top:484px;width:14px;height:14px"><svg width="14" height="14" viewBox="0 0 16 16" preserveAspectRatio="none"><path d="M2.2 4.6 L4.6 2.2 L8 5.6 L11.4 2.2 L13.8 4.6 L10.4 8 L13.8 11.4 L11.4 13.8 L8 10.4 L4.6 13.8 L2.2 11.4 L5.6 8 Z" fill="url(#gdel)" stroke="#4aa0d8" stroke-width=".9" stroke-linejoin="round"/></svg></div>
<div style="left:210px;top:509px;width:16px;height:16px"><svg width="16" height="16" viewBox="0 0 16 16" preserveAspectRatio="none"><rect x="0.2" y="0.2" width="15.6" height="15.6" fill="#3a2458"/><g fill="#14a8ea"><rect x="5.8" y="0.8" width="4.4" height="4.2"/><rect x="0.8" y="5.8" width="4.2" height="4.4"/><rect x="11" y="5.8" width="4.2" height="4.4"/><rect x="5.8" y="11" width="4.4" height="4.2"/></g><rect x="5.8" y="5.8" width="4.4" height="4.4" fill="#2c3cac"/><g fill="#8e1aa2"><rect x="0.8" y="0.8" width="4.2" height="4.2"/><rect x="11" y="0.8" width="4.2" height="4.2"/><rect x="0.8" y="11" width="4.2" height="4.2"/><rect x="11" y="11" width="4.2" height="4.2"/></g></svg></div>
<div style="left:208px;top:540px;width:16px;height:16px"><svg width="16" height="16" viewBox="0 0 16 16" preserveAspectRatio="none"><rect x="4.4" y="0.8" width="10.8" height="11.2" fill="#e9edf8" stroke="#b4b4e8" stroke-width=".8"/><path d="M4.4 6 V12 H15.2 V6" fill="none" stroke="#2a9ad0" stroke-width="1"/><path d="M0.4 0.6 H3 M1.7 0.6 V12.2 M0.4 12.2 H3" stroke="#0c0c2c" stroke-width="1.1"/><path d="M4.4 14.4 H15.4 M4.4 13 V15.8 M15.4 13 V15.8" stroke="#0c0c2c" stroke-width="1.1"/></svg></div>
<div style="left:1439px;top:455px;width:15px;height:15px"><svg width="15" height="15" viewBox="0 0 16 16" preserveAspectRatio="none"><path d="M5.4 2.2 H15.4 M5.4 7.6 H15.4 M5.4 13 H15.4" stroke="#f4f6fb" stroke-width="2.6" stroke-linecap="round"/><path d="M6 2.2 H15 M6 7.6 H15 M6 13 H15" stroke="#2a3044" stroke-width="1.1"/><g fill="#9fd0f8" stroke="#2a68d8" stroke-width="1"><circle cx="2.2" cy="2.4" r="1.7"/><circle cx="2.2" cy="7.8" r="1.7"/><circle cx="2.2" cy="13.2" r="1.7"/></g></svg></div>
<div style="left:235px;top:448px;width:1195px;height:279px;background:#eff1f6;"></div>
<div style="left:235px;top:449px;width:1195px;height:278px;background:#fff;"></div>
<div style="left:235px;top:449px;width:1195px;height:25px;background:linear-gradient(#e8ebf2 0%,#e2e6ee 48%,#d8dde8 52%,#d6dbe7 100%);"></div>
<div style="left:247px;top:451px;width:1px;height:22px;background:#e9ecf3;"></div>
<div style="left:246px;top:451px;width:1px;height:22px;background:#cfd5e1;"></div>
<div style="left:250px;top:450px;height:26px;line-height:26px;font-size:16px;color:#4b566f;white-space:nowrap;letter-spacing:0.031px;overflow:hidden;max-width:1180px;">Opis</div>
<div style="left:646px;top:451px;width:1px;height:22px;background:#e9ecf3;"></div>
<div style="left:645px;top:451px;width:1px;height:22px;background:#cfd5e1;"></div>
<div style="left:649px;top:450px;height:26px;line-height:26px;font-size:16px;color:#4b566f;white-space:nowrap;letter-spacing:0.019px;overflow:hidden;max-width:781px;">Składnik 1</div>
<div style="left:746px;top:451px;width:1px;height:22px;background:#e9ecf3;"></div>
<div style="left:745px;top:451px;width:1px;height:22px;background:#cfd5e1;"></div>
<div style="left:749px;top:450px;height:26px;line-height:26px;font-size:16px;color:#4b566f;white-space:nowrap;letter-spacing:0.019px;overflow:hidden;max-width:681px;">Składnik 2</div>
<div style="left:846px;top:451px;width:1px;height:22px;background:#e9ecf3;"></div>
<div style="left:845px;top:451px;width:1px;height:22px;background:#cfd5e1;"></div>
<div style="left:849px;top:450px;height:26px;line-height:26px;font-size:16px;color:#4b566f;white-space:nowrap;letter-spacing:0.019px;overflow:hidden;max-width:581px;">Składnik 3</div>
<div style="left:946px;top:451px;width:1px;height:22px;background:#e9ecf3;"></div>
<div style="left:945px;top:451px;width:1px;height:22px;background:#cfd5e1;"></div>
<div style="left:949px;top:450px;height:26px;line-height:26px;font-size:16px;color:#4b566f;white-space:nowrap;letter-spacing:0.019px;overflow:hidden;max-width:481px;">Składnik 4</div>
<div style="left:1046px;top:451px;width:1px;height:22px;background:#e9ecf3;"></div>
<div style="left:1045px;top:451px;width:1px;height:22px;background:#cfd5e1;"></div>
<div style="left:1049px;top:450px;height:26px;line-height:26px;font-size:16px;color:#4b566f;white-space:nowrap;letter-spacing:0.019px;overflow:hidden;max-width:381px;">Składnik 5</div>
<div style="left:1146px;top:451px;width:1px;height:22px;background:#e9ecf3;"></div>
<div style="left:1145px;top:451px;width:1px;height:22px;background:#cfd5e1;"></div>
<div style="left:1149px;top:450px;height:26px;line-height:26px;font-size:16px;color:#4b566f;white-space:nowrap;letter-spacing:0.019px;overflow:hidden;max-width:281px;">Składnik 6</div>
<div style="left:1246px;top:451px;width:1px;height:22px;background:#e9ecf3;"></div>
<div style="left:1245px;top:451px;width:1px;height:22px;background:#cfd5e1;"></div>
<div style="left:1249px;top:450px;height:26px;line-height:26px;font-size:16px;color:#4b566f;white-space:nowrap;letter-spacing:0.019px;overflow:hidden;max-width:181px;">Składnik 7</div>
<div style="left:1346px;top:451px;width:1px;height:22px;background:#e9ecf3;"></div>
<div style="left:1345px;top:451px;width:1px;height:22px;background:#cfd5e1;"></div>
<div style="left:1349px;top:450px;height:26px;line-height:26px;font-size:16px;color:#4b566f;white-space:nowrap;letter-spacing:0.019px;overflow:hidden;max-width:81px;">Składnik 8</div>
<div class="dj" style="left:235px;top:452px;height:22px;line-height:22px;font-size:9px;color:#222;white-space:nowrap;width:12px;text-align:center;overflow:hidden;">✻</div>
<div style="left:235px;top:474px;width:1195px;height:23px;background:#eef5ee;"></div>
<div style="left:235px;top:474px;width:12px;height:23px;background:linear-gradient(90deg,#e9ecf2,#dde2ec);"></div>
<div style="left:238px;top:481px;width:5px;height:9px"><svg width="5" height="9" viewBox="0 0 5 9"><circle cx="2.5" cy="2.5" r="2" fill="#222"/><circle cx="2.5" cy="2.3" r=".8" fill="#fff"/><path d="M2.5 4 V9" stroke="#222" stroke-width="1"/></svg></div>
<div style="left:764px;top:475px;height:23px;line-height:23px;font-size:16px;color:#7e7e80;white-space:nowrap;letter-spacing:0.219px;">kliknij aby dodać filtr</div>
<div style="left:235px;top:497px;width:1195px;height:2px;background:#a9b5ca;"></div>
<div style="left:247px;top:499px;width:1183px;height:23px;background:#fef5df;"></div>
<div style="left:235px;top:499px;width:12px;height:23px;background:linear-gradient(90deg,#eceff4,#dfe3ec);border-bottom:1px solid #d3d8e3;box-sizing:border-box;"></div>
<div style="left:647px;top:499px;width:100px;height:23px;background:#f1f3f8;"></div>
<div style="left:249px;top:500px;height:23px;line-height:23px;font-size:16px;color:#141a30;white-space:nowrap;letter-spacing:0.085px;">Stelaż drewniany; Tkanina zielona; Nić biała; sr=600,...</div>
<div style="left:649px;top:500px;height:23px;line-height:23px;font-size:16px;color:#141a30;white-space:nowrap;letter-spacing:-0.004px;">Stelaż drew...</div>
<div style="left:749.5px;top:500px;height:23px;line-height:23px;font-size:16px;color:#141a30;white-space:nowrap;letter-spacing:-0.089px;">Tkanina zie...</div>
<div style="left:849px;top:500px;height:23px;line-height:23px;font-size:16px;color:#141a30;white-space:nowrap;letter-spacing:-0.170px;">Nić biała</div>
<div style="left:247px;top:522px;width:1183px;height:23px;background:#edf5ed;"></div>
<div style="left:235px;top:522px;width:12px;height:23px;background:linear-gradient(90deg,#eceff4,#dfe3ec);border-bottom:1px solid #d3d8e3;box-sizing:border-box;"></div>
<div style="left:249px;top:523px;height:23px;line-height:23px;font-size:16px;color:#141a30;white-space:nowrap;letter-spacing:-0.065px;">Stelaż drewniany; Tkanina zielona; Nić czarna;</div>
<div style="left:649px;top:523px;height:23px;line-height:23px;font-size:16px;color:#141a30;white-space:nowrap;letter-spacing:-0.004px;">Stelaż drew...</div>
<div style="left:749.5px;top:523px;height:23px;line-height:23px;font-size:16px;color:#141a30;white-space:nowrap;letter-spacing:-0.089px;">Tkanina zie...</div>
<div style="left:849px;top:523px;height:23px;line-height:23px;font-size:16px;color:#141a30;white-space:nowrap;letter-spacing:-0.286px;">Nić czarna</div>
<div style="left:247px;top:545px;width:1183px;height:23px;background:#f4f6fa;"></div>
<div style="left:235px;top:545px;width:12px;height:23px;background:linear-gradient(90deg,#eceff4,#dfe3ec);border-bottom:1px solid #d3d8e3;box-sizing:border-box;"></div>
<div style="left:249px;top:546px;height:23px;line-height:23px;font-size:16px;color:#141a30;white-space:nowrap;letter-spacing:-0.081px;">Stelaż drewniany; Tkanina niebieska; Nić czarna;</div>
<div style="left:649px;top:546px;height:23px;line-height:23px;font-size:16px;color:#141a30;white-space:nowrap;letter-spacing:-0.004px;">Stelaż drew...</div>
<div style="left:749.5px;top:546px;height:23px;line-height:23px;font-size:16px;color:#141a30;white-space:nowrap;letter-spacing:0.070px;">Tkanina ni...</div>
<div style="left:849px;top:546px;height:23px;line-height:23px;font-size:16px;color:#141a30;white-space:nowrap;letter-spacing:-0.286px;">Nić czarna</div>
<div style="left:247px;top:568px;width:1183px;height:23px;background:#edf5ed;"></div>
<div style="left:235px;top:568px;width:12px;height:23px;background:linear-gradient(90deg,#eceff4,#dfe3ec);border-bottom:1px solid #d3d8e3;box-sizing:border-box;"></div>
<div style="left:249px;top:569px;height:23px;line-height:23px;font-size:16px;color:#141a30;white-space:nowrap;letter-spacing:-0.081px;">Stelaż drewniany; Tkanina czerwona; Nić czarna;</div>
<div style="left:649px;top:569px;height:23px;line-height:23px;font-size:16px;color:#141a30;white-space:nowrap;letter-spacing:-0.004px;">Stelaż drew...</div>
<div style="left:749.5px;top:569px;height:23px;line-height:23px;font-size:16px;color:#141a30;white-space:nowrap;letter-spacing:-0.142px;">Tkanina cz...</div>
<div style="left:849px;top:569px;height:23px;line-height:23px;font-size:16px;color:#141a30;white-space:nowrap;letter-spacing:-0.286px;">Nić czarna</div>
<div style="left:247px;top:591px;width:1183px;height:23px;background:#f4f6fa;"></div>
<div style="left:235px;top:591px;width:12px;height:23px;background:linear-gradient(90deg,#eceff4,#dfe3ec);border-bottom:1px solid #d3d8e3;box-sizing:border-box;"></div>
<div style="left:249px;top:592px;height:23px;line-height:23px;font-size:16px;color:#141a30;white-space:nowrap;letter-spacing:-0.124px;">Stelaż drewniany; Jeans; Nić czarna;</div>
<div style="left:649px;top:592px;height:23px;line-height:23px;font-size:16px;color:#141a30;white-space:nowrap;letter-spacing:-0.004px;">Stelaż drew...</div>
<div style="left:749.5px;top:592px;height:23px;line-height:23px;font-size:16px;color:#141a30;white-space:nowrap;transform:scaleX(0.9133);transform-origin:left center;">Jeans</div>
<div style="left:849px;top:592px;height:23px;line-height:23px;font-size:16px;color:#141a30;white-space:nowrap;letter-spacing:-0.286px;">Nić czarna</div>
<div style="left:239px;top:506px;width:5px;height:9px"><svg width="5" height="9" viewBox="0 0 5 9"><path d="M0.5 0.5 L4.5 4.5 L0.5 8.5 Z" fill="#222"/></svg></div>
<div style="left:235px;top:670px;width:1195px;height:40px;background:linear-gradient(#eceef3 0%,#e4e7ee 45%,#dadfe9 55%,#dbe0ea 100%);border-top:1px solid #b4bdce;box-sizing:border-box;"></div>
<div style="left:249px;top:674px;width:396px;height:32px;background:#fff;border:1px solid #c9cfdb;border-radius:2px;box-sizing:border-box;"></div>
<div style="left:261px;top:676px;height:30px;line-height:30px;font-size:16px;color:#141a30;white-space:nowrap;letter-spacing:0.094px;">5 pozycji</div>
<div style="left:235px;top:710px;width:1195px;height:17px;background:#e9ebef;border-top:1px solid #f6f7f9;box-sizing:border-box;"></div>
<div style="left:241px;top:713px;width:5px;height:8px"><svg width="5" height="8" viewBox="0 0 5 8"><path d="M5 0 V8 L0 4 Z" fill="#8f98ab"/></svg></div>
<div style="left:1418px;top:713px;width:5px;height:8px"><svg width="5" height="8" viewBox="0 0 5 8"><path d="M0 0 V8 L5 4 Z" fill="#8f98ab"/></svg></div>
<div style="left:252px;top:711px;width:419px;height:14px;background:linear-gradient(#f0f2f6,#d6dbe6);border:1px solid #a4aec2;border-radius:2px;box-sizing:border-box;"></div>
<div style="left:459px;top:715px;width:2px;height:6px;background:#4a5268;"></div>
<div style="left:462px;top:715px;width:2px;height:6px;background:#4a5268;"></div>
<div style="left:465px;top:715px;width:2px;height:6px;background:#4a5268;"></div>
<div style="left:237px;top:525px;width:742px;height:91px;border:2px solid #ec1a22;border-radius:7px;box-sizing:border-box;box-shadow:0 1px 3px rgba(90,0,0,.25);"></div>
<div style="left:202px;top:727px;width:1262px;height:4px;background:#fee8a3;border-radius:0 0 3px 3px;"></div>
<div style="left:204px;top:731px;width:1258px;height:1px;background:#a3afc8;"></div>
<div style="left:826px;top:734px;width:2px;height:2px;background:#7787ae;"></div>
<div style="left:830px;top:734px;width:2px;height:2px;background:#7787ae;"></div>
<div style="left:834px;top:734px;width:2px;height:2px;background:#7787ae;"></div>
<div style="left:838px;top:734px;width:2px;height:2px;background:#7787ae;"></div>
<div style="left:746px;top:738px;height:16px;line-height:16px;font-size:11px;color:#1a2440;white-space:nowrap;letter-spacing:2.031px;">UKRYJ</div>
<div style="left:798.5px;top:738px;height:16px;line-height:16px;font-size:11px;color:#1a2440;white-space:nowrap;letter-spacing:2.047px;">SZCZEGÓŁY</div>
<div style="left:890.5px;top:738px;height:16px;line-height:16px;font-size:11px;color:#1a2440;white-space:nowrap;letter-spacing:2.016px;">[F8]</div>
<div style="left:200px;top:756px;width:1265px;height:4px;background:#fee8a3;border-radius:0 0 3px 3px;"></div>
<div style="left:202px;top:760px;width:1261px;height:1px;background:#a9b4cb;"></div>
<div style="left:8px;top:761px;width:1458px;height:17px;background:linear-gradient(#eceff4 0%,#e4e8ef 48%,#d9dee8 52%,#dbe0ea 100%);"></div>
<div style="left:12px;top:761px;height:17px;line-height:17px;font-size:11px;color:#3a4562;white-space:nowrap;letter-spacing:0.004px;">Copyright © 2005-2024 RHO Software</div>
<div style="left:451px;top:761px;height:17px;line-height:17px;font-size:11px;color:#3a4562;white-space:nowrap;letter-spacing:0.083px;">Modus demo v.5.0.0.608</div>
<div style="left:890px;top:761px;height:17px;line-height:17px;font-size:11px;color:#3a4562;white-space:nowrap;letter-spacing:0.323px;">Nr licencji: 2223/111111111111111</div>
<div style="left:1300px;top:761px;height:17px;line-height:17px;font-size:11px;color:#3a4562;white-space:nowrap;width:161px;text-align:right;overflow:hidden;">2025-02-26,&nbsp; 13:50:30</div>
<div style="left:447px;top:762px;width:1px;height:15px;background:rgba(140,150,175,.15);"></div>
<div style="left:884px;top:762px;width:1px;height:15px;background:rgba(140,150,175,.15);"></div>
<div style="left:1326px;top:762px;width:1px;height:15px;background:rgba(140,150,175,.15);"></div>
</body></html>
